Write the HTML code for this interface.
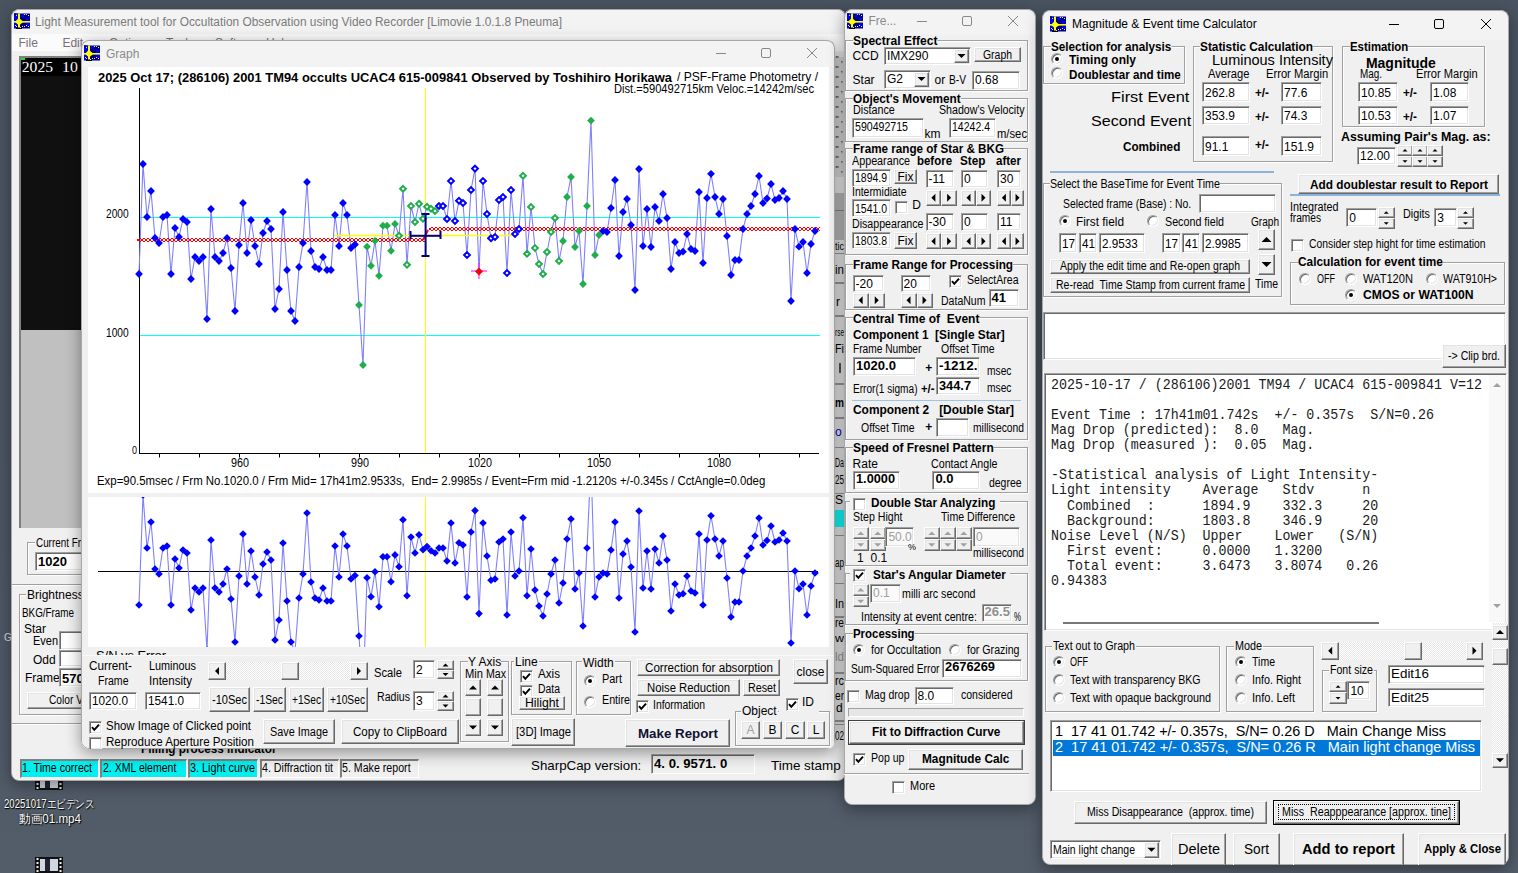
<!DOCTYPE html><html><head><meta charset="utf-8"><style>
*{margin:0;padding:0;box-sizing:border-box}
html,body{width:1518px;height:873px;overflow:hidden}
body{background:linear-gradient(180deg,#4a5461 0%,#4c5663 60%,#535d6a 100%);font-family:"Liberation Sans",sans-serif;font-size:12px;color:#000;position:relative}
.a,.t,.btn,.ed,.ck,.rd,.gb{position:absolute}
.t{white-space:pre;line-height:1;transform-origin:0 0}
.btn{background:#f0f0f0;border-top:1px solid #fff;border-left:1px solid #fff;border-right:1px solid #696969;border-bottom:1px solid #696969;box-shadow:inset -1px -1px 0 #a0a0a0, inset 1px 1px 0 #e3e3e3}
.ed{background:#fff;border-top:1px solid #a0a0a0;border-left:1px solid #a0a0a0;border-right:1px solid #fff;border-bottom:1px solid #fff;box-shadow:inset 1px 1px 0 #696969, inset -1px -1px 0 #e3e3e3}
.ck{width:13px;height:13px;background:#fff;border-top:1px solid #a0a0a0;border-left:1px solid #a0a0a0;border-right:1px solid #fff;border-bottom:1px solid #fff;box-shadow:inset 1px 1px 0 #696969, inset -1px -1px 0 #e3e3e3}
.rd{width:12px;height:12px;border-radius:6px;background:#fff;border:1px solid;border-color:#a0a0a0 #fff #fff #a0a0a0;box-shadow:inset 1px 1px 0 #696969, inset -1px -1px 0 #e3e3e3}
.gb{border:1px solid #a0a0a0;box-shadow:inset 1px 1px 0 #fff, 1px 1px 0 #fff}
.trk{position:absolute;background-color:#f4f4f4;background-image:repeating-conic-gradient(#ffffff 0 25%,#e6e6e6 0 50%);background-size:2px 2px}
.win{position:absolute;background:#f0f0f0;border:1px solid #9a9a9a;border-radius:8px;overflow:hidden;box-shadow:0 2px 10px rgba(0,0,0,.35)}
</style></head><body><svg class="a" style="left:35px;top:766px" width="28" height="24"><rect x="0" y="0" width="28" height="24" fill="#111"/><rect x="5" y="2" width="18" height="20" fill="#cfd8e0"/><rect x="10" y="2" width="5" height="20" fill="#223"/><g fill="#eee"><rect x="1.5" y="1" width="2" height="2"/><rect x="24.5" y="1" width="2" height="2"/><rect x="1.5" y="5" width="2" height="2"/><rect x="24.5" y="5" width="2" height="2"/><rect x="1.5" y="9" width="2" height="2"/><rect x="24.5" y="9" width="2" height="2"/><rect x="1.5" y="13" width="2" height="2"/><rect x="24.5" y="13" width="2" height="2"/><rect x="1.5" y="17" width="2" height="2"/><rect x="24.5" y="17" width="2" height="2"/><rect x="1.5" y="21" width="2" height="2"/><rect x="24.5" y="21" width="2" height="2"/></g></svg>
<div class="t" style="left:4.40px;top:797.64px;font-size:12px;color:#fff;transform:scaleX(0.7990);text-shadow:0 0 2px #000,1px 1px 1px #000;">20251017エビデンス</div>
<div class="t" style="left:18.50px;top:813.14px;font-size:12px;color:#fff;transform:scaleX(0.9683);text-shadow:0 0 2px #000,1px 1px 1px #000;">動画01.mp4</div>
<svg class="a" style="left:35px;top:857px" width="28" height="16"><rect x="0" y="0" width="28" height="16" fill="#111"/><rect x="5" y="2" width="18" height="12" fill="#cfd8e0"/><rect x="10" y="2" width="5" height="12" fill="#223"/><g fill="#eee"><rect x="1.5" y="1" width="2" height="2"/><rect x="24.5" y="1" width="2" height="2"/><rect x="1.5" y="5" width="2" height="2"/><rect x="24.5" y="5" width="2" height="2"/><rect x="1.5" y="9" width="2" height="2"/><rect x="24.5" y="9" width="2" height="2"/><rect x="1.5" y="13" width="2" height="2"/><rect x="24.5" y="13" width="2" height="2"/></g></svg>
<div class="t" style="left:4.00px;top:632.53px;font-size:10px;color:#ddd;">G</div>
<div class="a" style="left:11px;top:9px;width:835px;height:772px;border-radius:8px;box-shadow:0 4px 16px rgba(0,0,0,.4)"></div>
<div class="a" style="left:0;top:0;width:1518px;height:873px;clip-path:inset(9px 672px 92px 11px round 8px)">
<div class="a" style="left:11px;top:9px;width:835px;height:772px;background:#f0f0f0;border:1px solid #a8a8a8;border-radius:8px"></div>
<div class="a" style="left:11px;top:9px;width:835px;height:26px;background:#f3f3f3;border-radius:8px 8px 0 0;border:1px solid #a8a8a8;border-bottom:none"></div>
<svg class="a" style="left:14px;top:13px" width="16" height="16" viewBox="0 0 16 16"><rect x="0" y="0.5" width="16" height="15" fill="#000088"/><rect x="0" y="0.5" width="4.5" height="7" fill="#0000f0"/><rect x="0" y="9" width="3" height="6" fill="#0000e0"/><rect x="7" y="2" width="3" height="2" fill="#0000ff"/><rect x="12" y="5" width="3" height="3" fill="#0000ff"/><rect x="12" y="10" width="4" height="3" fill="#0000ff"/><rect x="0" y="0.5" width="2" height="1" fill="#000"/><rect x="2" y="14.5" width="6" height="1.5" fill="#000"/><rect x="4" y="0.5" width="2" height="14" fill="#ffff00"/><rect x="0" y="8" width="16" height="1.6" fill="#ffff00"/><polygon points="5,4.8 7,6.8 9.5,8.8 7,10.8 5,12.5 3,10.8 1,8.8 3,6.8" fill="#ffff00"/><g fill="#e8e8e8"><rect x="2.0" y="1.9" width="1" height="1"/><rect x="9.9" y="1.0" width="1" height="1"/><rect x="11.9" y="1.0" width="1" height="1"/><rect x="14.0" y="2.0" width="1" height="1"/><rect x="1.0" y="12.0" width="1" height="1"/><rect x="2.0" y="13.0" width="1" height="1"/><rect x="8.0" y="13.0" width="1" height="1"/><rect x="10.0" y="13.0" width="1" height="1"/><rect x="12.0" y="12.0" width="1" height="1"/><rect x="14.0" y="13.0" width="1" height="1"/><rect x="6.0" y="14.0" width="1" height="1"/></g></svg>
<div class="t" style="left:35.00px;top:15.84px;font-size:12px;color:#7a7a7a;transform:scaleX(0.9905);">Light Measurement tool for Occultation Observation using Video Recorder [Limovie 1.0.1.8 Pneuma]</div>
<div class="a" style="left:12px;top:34px;width:834px;height:17px;background:#fbfbfb"></div>
<div class="t" style="left:18.50px;top:37.24px;font-size:12px;color:#7c6f78;">File</div>
<div class="t" style="left:62.40px;top:37.24px;font-size:12px;color:#7c6f78;">Edit</div>
<div class="t" style="left:109.00px;top:37.24px;font-size:12px;color:#7c6f78;">Option</div>
<div class="t" style="left:166.00px;top:37.24px;font-size:12px;color:#7c6f78;">Tools</div>
<div class="t" style="left:215.00px;top:37.24px;font-size:12px;color:#7c6f78;">Software</div>
<div class="t" style="left:266.00px;top:37.24px;font-size:12px;color:#7c6f78;">Help</div>
<div class="a" style="left:19px;top:56px;width:70px;height:472px;background:#c0c0c0;border-top:2px solid #808080;border-left:2px solid #808080"></div>
<div class="a" style="left:21px;top:58px;width:62px;height:272px;background:#101010"></div>
<div class="a" style="left:21px;top:58px;width:62px;height:18px;background:#000"></div>
<div class="t" style="left:21.80px;top:58.79px;font-size:15.6px;color:#fff;font-family:'Liberation Serif',serif;">2025</div>
<div class="t" style="left:61.60px;top:58.79px;font-size:15.6px;color:#fff;transform:scaleX(1.0128);font-family:'Liberation Serif',serif;">10</div>
<div class="a" style="left:21px;top:57.5px;width:4px;height:2px;background:#22dd22"></div>
<div class="gb" style="left:27px;top:542px;width:73px;height:33px"></div>
<div class="a" style="left:35.0px;top:539.0px;width:66.2px;height:6px;background:#f0f0f0"></div>
<div class="t" style="left:36.00px;top:537.34px;font-size:12px;transform:scaleX(0.8229);">Current Frame</div>
<div class="ed" style="left:35px;top:552px;width:65px;height:19px;background:#fff"></div>
<div class="t" style="left:38.00px;top:555.00px;font-size:13px;font-weight:bold;">1020</div>
<div class="a" style="left:12px;top:584px;width:70px;height:1px;background:#a0a0a0"></div>
<div class="a" style="left:12px;top:585px;width:70px;height:1px;background:#fff"></div>
<div class="gb" style="left:19px;top:594px;width:81px;height:121px"></div>
<div class="a" style="left:26.0px;top:591.0px;width:58.7px;height:6px;background:#f0f0f0"></div>
<div class="t" style="left:27.00px;top:588.84px;font-size:12px;">Brightness</div>
<div class="t" style="left:22.00px;top:606.84px;font-size:12px;transform:scaleX(0.8209);">BKG/Frame</div>
<div class="t" style="left:24.00px;top:622.84px;font-size:12px;">Star</div>
<div class="t" style="left:33.00px;top:634.84px;font-size:12px;transform:scaleX(0.9140);">Even</div>
<div class="ed" style="left:59px;top:631px;width:41px;height:19px;background:#fff"></div>
<div class="t" style="left:33.00px;top:653.84px;font-size:12px;">Odd</div>
<div class="ed" style="left:59px;top:650px;width:41px;height:17px;background:#fff"></div>
<div class="t" style="left:25.00px;top:671.84px;font-size:12px;">Frame</div>
<div class="ed" style="left:59px;top:668px;width:41px;height:19px;background:#fff"></div>
<div class="t" style="left:62.00px;top:672.00px;font-size:13px;font-weight:bold;">570</div>
<div class="btn" style="left:27px;top:692px;width:83px;height:17px"></div>
<div class="t" style="left:48.50px;top:694.34px;font-size:12px;transform:scaleX(0.8497);">Color V</div>
<div class="a" style="left:12px;top:723px;width:834px;height:1px;background:#a0a0a0"></div>
<div class="a" style="left:12px;top:724px;width:834px;height:1px;background:#fff"></div>
<div class="t" style="left:141.00px;top:741.50px;font-size:13px;font-weight:bold;transform:scaleX(0.9018);">Filling process indicator</div>
<div class="a" style="left:20px;top:759px;width:79px;height:19px;background:#00f0f0;border-top:2px solid #808080;border-left:2px solid #808080;border-bottom:1px solid #fff;border-right:1px solid #fff"></div>
<div class="t" style="left:22.00px;top:761.84px;font-size:12px;transform:scaleX(0.8821);">1. Time correct</div>
<div class="a" style="left:100px;top:759px;width:87px;height:19px;background:#00f0f0;border-top:2px solid #808080;border-left:2px solid #808080;border-bottom:1px solid #fff;border-right:1px solid #fff"></div>
<div class="t" style="left:102.50px;top:761.84px;font-size:12px;transform:scaleX(0.8780);">2. XML element</div>
<div class="a" style="left:188px;top:759px;width:70px;height:19px;background:#00f0f0;border-top:2px solid #808080;border-left:2px solid #808080;border-bottom:1px solid #fff;border-right:1px solid #fff"></div>
<div class="t" style="left:190.00px;top:761.84px;font-size:12px;transform:scaleX(0.9023);">3. Light curve</div>
<div class="a" style="left:260px;top:759px;width:79px;height:19px;background:#f0f0f0;border-top:2px solid #808080;border-left:2px solid #808080;border-bottom:1px solid #fff;border-right:1px solid #fff"></div>
<div class="t" style="left:262.20px;top:761.84px;font-size:12px;transform:scaleX(0.8896);">4. Diffraction tit</div>
<div class="a" style="left:340px;top:759px;width:79px;height:19px;background:#f0f0f0;border-top:2px solid #808080;border-left:2px solid #808080;border-bottom:1px solid #fff;border-right:1px solid #fff"></div>
<div class="t" style="left:342.30px;top:761.84px;font-size:12px;transform:scaleX(0.8867);">5. Make report</div>
<div class="t" style="left:531.30px;top:758.60px;font-size:13px;transform:scaleX(1.0245);">SharpCap version:</div>
<div class="a" style="left:651px;top:754px;width:104px;height:20px;background:#f0f0f0;border-top:1px solid #a0a0a0;border-left:1px solid #a0a0a0;border-right:1px solid #fff;border-bottom:1px solid #fff;box-shadow:inset 1px 1px 0 #696969"></div>
<div class="t" style="left:654.40px;top:758.04px;font-size:12px;font-weight:bold;transform:scaleX(1.0971);">4. 0. 9571. 0</div>
<div class="t" style="left:771.20px;top:758.60px;font-size:13px;transform:scaleX(1.0338);">Time stamp</div>
<div class="a" style="left:835px;top:52px;width:9px;height:696px;background:#ececec"></div>
<div class="a" style="left:835px;top:57px;width:9px;height:120px;background:#dadada"></div>
<div class="t" style="left:835.50px;top:55.38px;font-size:9px;color:#222;">"</div>
<div class="t" style="left:840.50px;top:55.38px;font-size:9px;color:#222;">,</div>
<div class="t" style="left:835.50px;top:65.38px;font-size:9px;color:#222;">"</div>
<div class="t" style="left:840.50px;top:65.38px;font-size:9px;color:#222;">,</div>
<div class="t" style="left:835.50px;top:75.38px;font-size:9px;color:#222;">"</div>
<div class="t" style="left:840.50px;top:75.38px;font-size:9px;color:#222;">,</div>
<div class="t" style="left:835.50px;top:85.38px;font-size:9px;color:#222;">"</div>
<div class="t" style="left:840.50px;top:85.38px;font-size:9px;color:#222;">,</div>
<div class="t" style="left:835.50px;top:95.38px;font-size:9px;color:#222;">"</div>
<div class="t" style="left:840.50px;top:95.38px;font-size:9px;color:#222;">,</div>
<div class="t" style="left:835.50px;top:105.38px;font-size:9px;color:#222;">"</div>
<div class="t" style="left:840.50px;top:105.38px;font-size:9px;color:#222;">,</div>
<div class="t" style="left:835.50px;top:115.38px;font-size:9px;color:#222;">"</div>
<div class="t" style="left:840.50px;top:115.38px;font-size:9px;color:#222;">,</div>
<div class="t" style="left:835.50px;top:125.38px;font-size:9px;color:#222;">"</div>
<div class="t" style="left:840.50px;top:125.38px;font-size:9px;color:#222;">,</div>
<div class="t" style="left:835.50px;top:135.38px;font-size:9px;color:#222;">"</div>
<div class="t" style="left:840.50px;top:135.38px;font-size:9px;color:#222;">,</div>
<div class="t" style="left:835.50px;top:145.38px;font-size:9px;color:#222;">"</div>
<div class="t" style="left:840.50px;top:145.38px;font-size:9px;color:#222;">,</div>
<div class="t" style="left:835.50px;top:155.38px;font-size:9px;color:#222;">"</div>
<div class="t" style="left:840.50px;top:155.38px;font-size:9px;color:#222;">,</div>
<div class="t" style="left:835.50px;top:165.38px;font-size:9px;color:#222;">"</div>
<div class="t" style="left:840.50px;top:165.38px;font-size:9px;color:#222;">,</div>
<div class="a" style="left:835px;top:193px;width:9px;height:50px;background:#bdbdbd"></div>
<div class="a" style="left:835px;top:210px;width:9px;height:1px;background:#888"></div>
<div class="a" style="left:835px;top:240px;width:9px;height:12px;background:#ececec"></div>
<div class="t" style="left:835.00px;top:240.69px;font-size:11px;transform:scaleX(0.8182);">tic</div>
<div class="a" style="left:835px;top:252.6px;width:9px;height:1.5px;background:#9a9a9a"></div>
<div class="a" style="left:835px;top:282.3px;width:9px;height:1.5px;background:#9a9a9a"></div>
<div class="a" style="left:835px;top:315.4px;width:9px;height:1.5px;background:#9a9a9a"></div>
<div class="a" style="left:835px;top:383px;width:9px;height:1.5px;background:#9a9a9a"></div>
<div class="a" style="left:835px;top:417px;width:9px;height:1.5px;background:#9a9a9a"></div>
<div class="a" style="left:835px;top:446.9px;width:9px;height:1.5px;background:#9a9a9a"></div>
<div class="a" style="left:835px;top:492.6px;width:9px;height:1.5px;background:#9a9a9a"></div>
<div class="a" style="left:835px;top:534.9px;width:9px;height:1.5px;background:#9a9a9a"></div>
<div class="a" style="left:835px;top:582.9px;width:9px;height:1.5px;background:#9a9a9a"></div>
<div class="a" style="left:835px;top:616px;width:9px;height:1.5px;background:#9a9a9a"></div>
<div class="a" style="left:835px;top:672px;width:9px;height:1.5px;background:#9a9a9a"></div>
<div class="a" style="left:835px;top:720px;width:9px;height:1.5px;background:#9a9a9a"></div>
<div class="a" style="left:835px;top:723.6px;width:9px;height:1.5px;background:#9a9a9a"></div>
<div class="t" style="left:835.00px;top:264.14px;font-size:12px;transform:scaleX(0.9637);">in</div>
<div class="t" style="left:836.00px;top:296.14px;font-size:12px;">r</div>
<div class="t" style="left:835.00px;top:327.54px;font-size:10px;transform:scaleX(0.6479);">rse</div>
<div class="t" style="left:835.00px;top:342.84px;font-size:12px;transform:scaleX(0.9004);">Fi</div>
<div class="a" style="left:839px;top:363px;width:1.5px;height:10px;background:#555"></div>
<div class="t" style="left:835.00px;top:396.74px;font-size:12px;font-weight:bold;transform:scaleX(0.8435);">m</div>
<div class="t" style="left:835.00px;top:426.44px;font-size:12px;color:#00c;">o</div>
<div class="t" style="left:835.00px;top:457.24px;font-size:12px;transform:scaleX(0.5867);">Da</div>
<div class="t" style="left:835.00px;top:474.44px;font-size:12px;transform:scaleX(0.6743);">25</div>
<div class="t" style="left:835.00px;top:493.84px;font-size:12px;">S</div>
<div class="a" style="left:835px;top:509.7px;width:9px;height:17px;background:#10ffff"></div>
<div class="t" style="left:835.00px;top:556.74px;font-size:12px;transform:scaleX(0.6743);">ap</div>
<div class="t" style="left:835.00px;top:597.84px;font-size:12px;transform:scaleX(0.8993);">In</div>
<div class="t" style="left:835.00px;top:617.24px;font-size:12px;transform:scaleX(0.8435);">re</div>
<div class="t" style="left:835.00px;top:632.69px;font-size:11px;transform:scaleX(1.1330);">w</div>
<div class="t" style="left:835.00px;top:651.04px;font-size:12px;color:#999;transform:scaleX(0.9637);">ld</div>
<div class="t" style="left:835.00px;top:674.84px;font-size:12px;transform:scaleX(0.9003);">rc</div>
<div class="t" style="left:835.00px;top:690.44px;font-size:12px;transform:scaleX(0.8435);">er</div>
<div class="t" style="left:836.00px;top:702.44px;font-size:12px;">d</div>
<div class="t" style="left:835.00px;top:729.84px;font-size:12px;transform:scaleX(0.6743);">02</div>
</div>
<div class="a" style="left:81px;top:40px;width:754px;height:709px;border-radius:8px;box-shadow:0 4px 16px rgba(0,0,0,.4)"></div>
<div class="a" style="left:0;top:0;width:1518px;height:873px;clip-path:inset(40px 683px 124px 81px round 8px)">
<div class="a" style="left:81px;top:40px;width:754px;height:709px;background:#f0f0f0;border:1px solid #a8a8a8;border-radius:8px"></div>
<div class="a" style="left:81px;top:40px;width:754px;height:27px;background:#f3f3f3;border-radius:8px 8px 0 0;border:1px solid #a8a8a8;border-bottom:none"></div>
<svg class="a" style="left:84px;top:45px" width="16" height="16" viewBox="0 0 16 16"><rect x="0" y="0.5" width="16" height="15" fill="#000088"/><rect x="0" y="0.5" width="4.5" height="7" fill="#0000f0"/><rect x="0" y="9" width="3" height="6" fill="#0000e0"/><rect x="7" y="2" width="3" height="2" fill="#0000ff"/><rect x="12" y="5" width="3" height="3" fill="#0000ff"/><rect x="12" y="10" width="4" height="3" fill="#0000ff"/><rect x="0" y="0.5" width="2" height="1" fill="#000"/><rect x="2" y="14.5" width="6" height="1.5" fill="#000"/><rect x="4" y="0.5" width="2" height="14" fill="#ffff00"/><rect x="0" y="8" width="16" height="1.6" fill="#ffff00"/><polygon points="5,4.8 7,6.8 9.5,8.8 7,10.8 5,12.5 3,10.8 1,8.8 3,6.8" fill="#ffff00"/><g fill="#e8e8e8"><rect x="2.0" y="1.9" width="1" height="1"/><rect x="9.9" y="1.0" width="1" height="1"/><rect x="11.9" y="1.0" width="1" height="1"/><rect x="14.0" y="2.0" width="1" height="1"/><rect x="1.0" y="12.0" width="1" height="1"/><rect x="2.0" y="13.0" width="1" height="1"/><rect x="8.0" y="13.0" width="1" height="1"/><rect x="10.0" y="13.0" width="1" height="1"/><rect x="12.0" y="12.0" width="1" height="1"/><rect x="14.0" y="13.0" width="1" height="1"/><rect x="6.0" y="14.0" width="1" height="1"/></g></svg>
<div class="t" style="left:106.00px;top:47.64px;font-size:12px;color:#8a8a8a;">Graph</div>
<svg class="a" style="left:0;top:0;overflow:visible" width="1" height="1"><line x1="716" y1="53.5" x2="726" y2="53.5" stroke="#888" stroke-width="1"/><rect x="761.5" y="48.5" width="9" height="9" rx="1.5" fill="none" stroke="#888" stroke-width="1"/><path d="M807 48.0 L817 58.0 M817 48.0 L807 58.0" stroke="#888" stroke-width="1"/></svg>
<div class="a" style="left:88px;top:67px;width:741px;height:426px;background:#fff"></div>
<div class="a" style="left:88px;top:497px;width:741px;height:150px;background:#fff"></div>
<svg class="a" style="left:0;top:0" width="1518" height="873"><defs><pattern id="rp" x="1" y="238" width="4" height="4" patternUnits="userSpaceOnUse"><rect x="2" y="0" width="2" height="1" fill="#ff0000"/><rect x="0" y="1" width="2" height="2" fill="#ff0000"/><rect x="2" y="3" width="2" height="1" fill="#ff0000"/></pattern><pattern id="rp2" x="1" y="227" width="4" height="4" patternUnits="userSpaceOnUse"><rect x="2" y="0" width="2" height="1" fill="#ff0000"/><rect x="0" y="1" width="2" height="2" fill="#ff0000"/><rect x="2" y="3" width="2" height="1" fill="#ff0000"/></pattern><clipPath id="c1"><rect x="88" y="67" width="741" height="426"/></clipPath><clipPath id="c2"><rect x="88" y="497" width="741" height="150"/></clipPath></defs><g clip-path="url(#c1)"><rect x="139" y="217" width="681" height="1" fill="#00ffff"/><rect x="139" y="335" width="681" height="1" fill="#00ffff"/><rect x="425" y="88" width="1" height="365" fill="#ffff00"/><rect x="139" y="88" width="1" height="366" fill="#000"/><rect x="139" y="453" width="680" height="1" fill="#000"/><rect x="159.0" y="454" width="1" height="3.5" fill="#000"/><rect x="199.0" y="454" width="1" height="3.5" fill="#000"/><rect x="239.0" y="454" width="1" height="3.5" fill="#000"/><rect x="279.0" y="454" width="1" height="3.5" fill="#000"/><rect x="319.0" y="454" width="1" height="3.5" fill="#000"/><rect x="359.0" y="454" width="1" height="3.5" fill="#000"/><rect x="399.0" y="454" width="1" height="3.5" fill="#000"/><rect x="439.0" y="454" width="1" height="3.5" fill="#000"/><rect x="479.0" y="454" width="1" height="3.5" fill="#000"/><rect x="519.0" y="454" width="1" height="3.5" fill="#000"/><rect x="559.0" y="454" width="1" height="3.5" fill="#000"/><rect x="599.0" y="454" width="1" height="3.5" fill="#000"/><rect x="639.0" y="454" width="1" height="3.5" fill="#000"/><rect x="679.0" y="454" width="1" height="3.5" fill="#000"/><rect x="719.0" y="454" width="1" height="3.5" fill="#000"/><rect x="759.0" y="454" width="1" height="3.5" fill="#000"/><rect x="799.0" y="454" width="1" height="3.5" fill="#000"/><polyline points="139,274.0 143,164.0 147,217.0 151,191.0 155,238.0 159,243.0 163,217.0 167,215.0 171,274.0 175,228.0 179,237.0 183,219.0 187,222.0 191,279.0 195,257.0 199,261.0 203,257.0 207,319.0 211,209.0 215,257.0 219,261.0 223,253.0 227,238.0 231,268.0 235,311.0 239,245.0 243,203.0 247,253.0 251,220.0 255,246.0 259,264.0 263,233.0 267,221.0 271,229.0 275,309.0 279,289.0 283,212.0 287,270.0 291,311.0 295,321.0 299,267.0 303,243.0 307,182.0 311,251.0 315,267.0 319,269.0 323,257.0 327,270.0 331,270.0 335,215.0 339,246.0 343,203.0 347,215.0 351,248.0 355,244.5 359,305.0 363,365.0 367,246.7 371,265.8 375,240.8 379,275.8 383,225.7 387,225.7 391,250.8 395,223.9 399,235.7 403,188.8 407,264.8 411,206.0 415,222.0 419,203.7 423,218.8 427,206.8 431,208.8 435,211.0 439,206.0 443,206.0 447,219.0 451,181.0 455,221.0 459,200.8 463,203.0 467,255.0 471,190.0 475,168.6 479,271.6 483,181.0 487,214.0 491,238.3 495,237.0 499,200.0 503,197.0 507,273.0 511,190.0 515,234.0 519,229.0 523,175.8 527,253.7 531,207.0 535,248.0 539,264.0 543,274.0 547,252.0 551,232.0 555,218.0 559,261.0 563,241.0 567,197.0 571,177.0 575,247.0 579,231.0 583,284.0 587,206.0 591,120.6 595,255.0 599,235.0 603,231.0 607,232.0 611,208.0 615,180.0 619,256.0 623,212.0 627,199.0 631,225.0 635,290.0 639,169.0 643,246.0 647,209.0 651,247.0 655,207.0 659,221.0 663,194.0 667,218.0 671,269.0 675,242.0 679,253.0 683,251.7 687,234.0 691,249.0 695,251.0 699,192.0 703,263.0 707,198.0 711,173.8 715,197.0 719,214.0 723,199.0 727,236.0 731,275.0 735,260.0 739,260.0 743,229.0 747,214.0 751,206.0 755,194.0 759,176.0 763,203.0 767,198.5 771,184.0 775,200.0 779,198.0 783,191.0 787,199.0 791,301.0 795,229.0 799,246.7 803,242.0 807,273.0 811,244.0 815,231.0" fill="none" stroke="#8080ff" stroke-width="1.1"/><rect x="137" y="238" width="288" height="4" fill="url(#rp)"/><rect x="429" y="227" width="391" height="4" fill="url(#rp2)"/><path d="M423 240 L428 230" stroke="#ff0000" stroke-width="2"/><rect x="334" y="234.8" width="182" height="1.5" fill="#ffff00"/><path d="M139.0 270.1 L142.9 274.0 L139.0 277.9 L135.1 274.0 Z" fill="#0000ff"/><path d="M143.0 160.1 L146.9 164.0 L143.0 167.9 L139.1 164.0 Z" fill="#0000ff"/><path d="M147.0 213.1 L150.9 217.0 L147.0 220.9 L143.1 217.0 Z" fill="#0000ff"/><path d="M151.0 187.1 L154.9 191.0 L151.0 194.9 L147.1 191.0 Z" fill="#0000ff"/><path d="M155.0 234.1 L158.9 238.0 L155.0 241.9 L151.1 238.0 Z" fill="#0000ff"/><path d="M159.0 239.1 L162.9 243.0 L159.0 246.9 L155.1 243.0 Z" fill="#0000ff"/><path d="M163.0 213.1 L166.9 217.0 L163.0 220.9 L159.1 217.0 Z" fill="#0000ff"/><path d="M167.0 211.1 L170.9 215.0 L167.0 218.9 L163.1 215.0 Z" fill="#0000ff"/><path d="M171.0 270.1 L174.9 274.0 L171.0 277.9 L167.1 274.0 Z" fill="#0000ff"/><path d="M175.0 224.1 L178.9 228.0 L175.0 231.9 L171.1 228.0 Z" fill="#0000ff"/><path d="M179.0 233.1 L182.9 237.0 L179.0 240.9 L175.1 237.0 Z" fill="#0000ff"/><path d="M183.0 215.1 L186.9 219.0 L183.0 222.9 L179.1 219.0 Z" fill="#0000ff"/><path d="M187.0 218.1 L190.9 222.0 L187.0 225.9 L183.1 222.0 Z" fill="#0000ff"/><path d="M191.0 275.1 L194.9 279.0 L191.0 282.9 L187.1 279.0 Z" fill="#0000ff"/><path d="M195.0 253.1 L198.9 257.0 L195.0 260.9 L191.1 257.0 Z" fill="#0000ff"/><path d="M199.0 257.1 L202.9 261.0 L199.0 264.9 L195.1 261.0 Z" fill="#0000ff"/><path d="M203.0 253.1 L206.9 257.0 L203.0 260.9 L199.1 257.0 Z" fill="#0000ff"/><path d="M207.0 315.1 L210.9 319.0 L207.0 322.9 L203.1 319.0 Z" fill="#0000ff"/><path d="M211.0 205.1 L214.9 209.0 L211.0 212.9 L207.1 209.0 Z" fill="#0000ff"/><path d="M215.0 253.1 L218.9 257.0 L215.0 260.9 L211.1 257.0 Z" fill="#0000ff"/><path d="M219.0 257.1 L222.9 261.0 L219.0 264.9 L215.1 261.0 Z" fill="#0000ff"/><path d="M223.0 249.1 L226.9 253.0 L223.0 256.9 L219.1 253.0 Z" fill="#0000ff"/><path d="M227.0 234.1 L230.9 238.0 L227.0 241.9 L223.1 238.0 Z" fill="#0000ff"/><path d="M231.0 264.1 L234.9 268.0 L231.0 271.9 L227.1 268.0 Z" fill="#0000ff"/><path d="M235.0 307.1 L238.9 311.0 L235.0 314.9 L231.1 311.0 Z" fill="#0000ff"/><path d="M239.0 241.1 L242.9 245.0 L239.0 248.9 L235.1 245.0 Z" fill="#0000ff"/><path d="M243.0 199.1 L246.9 203.0 L243.0 206.9 L239.1 203.0 Z" fill="#0000ff"/><path d="M247.0 249.1 L250.9 253.0 L247.0 256.9 L243.1 253.0 Z" fill="#0000ff"/><path d="M251.0 216.1 L254.9 220.0 L251.0 223.9 L247.1 220.0 Z" fill="#0000ff"/><path d="M255.0 242.1 L258.9 246.0 L255.0 249.9 L251.1 246.0 Z" fill="#0000ff"/><path d="M259.0 260.1 L262.9 264.0 L259.0 267.9 L255.1 264.0 Z" fill="#0000ff"/><path d="M263.0 229.1 L266.9 233.0 L263.0 236.9 L259.1 233.0 Z" fill="#0000ff"/><path d="M267.0 217.1 L270.9 221.0 L267.0 224.9 L263.1 221.0 Z" fill="#0000ff"/><path d="M271.0 225.1 L274.9 229.0 L271.0 232.9 L267.1 229.0 Z" fill="#0000ff"/><path d="M275.0 305.1 L278.9 309.0 L275.0 312.9 L271.1 309.0 Z" fill="#0000ff"/><path d="M279.0 285.1 L282.9 289.0 L279.0 292.9 L275.1 289.0 Z" fill="#0000ff"/><path d="M283.0 208.1 L286.9 212.0 L283.0 215.9 L279.1 212.0 Z" fill="#0000ff"/><path d="M287.0 266.1 L290.9 270.0 L287.0 273.9 L283.1 270.0 Z" fill="#0000ff"/><path d="M291.0 307.1 L294.9 311.0 L291.0 314.9 L287.1 311.0 Z" fill="#0000ff"/><path d="M295.0 317.1 L298.9 321.0 L295.0 324.9 L291.1 321.0 Z" fill="#0000ff"/><path d="M299.0 263.1 L302.9 267.0 L299.0 270.9 L295.1 267.0 Z" fill="#0000ff"/><path d="M303.0 239.1 L306.9 243.0 L303.0 246.9 L299.1 243.0 Z" fill="#0000ff"/><path d="M307.0 178.1 L310.9 182.0 L307.0 185.9 L303.1 182.0 Z" fill="#0000ff"/><path d="M311.0 247.1 L314.9 251.0 L311.0 254.9 L307.1 251.0 Z" fill="#0000ff"/><path d="M315.0 263.1 L318.9 267.0 L315.0 270.9 L311.1 267.0 Z" fill="#0000ff"/><path d="M319.0 265.1 L322.9 269.0 L319.0 272.9 L315.1 269.0 Z" fill="#0000ff"/><path d="M323.0 253.1 L326.9 257.0 L323.0 260.9 L319.1 257.0 Z" fill="#0000ff"/><path d="M327.0 266.1 L330.9 270.0 L327.0 273.9 L323.1 270.0 Z" fill="#0000ff"/><path d="M331.0 266.1 L334.9 270.0 L331.0 273.9 L327.1 270.0 Z" fill="#0000ff"/><path d="M335.0 211.1 L338.9 215.0 L335.0 218.9 L331.1 215.0 Z" fill="#0000ff"/><path d="M339.0 242.1 L342.9 246.0 L339.0 249.9 L335.1 246.0 Z" fill="#0000ff"/><path d="M343.0 199.1 L346.9 203.0 L343.0 206.9 L339.1 203.0 Z" fill="#0000ff"/><path d="M347.0 211.1 L350.9 215.0 L347.0 218.9 L343.1 215.0 Z" fill="#0000ff"/><path d="M351.0 244.1 L354.9 248.0 L351.0 251.9 L347.1 248.0 Z" fill="#0000ff"/><path d="M355.0 240.6 L358.9 244.5 L355.0 248.4 L351.1 244.5 Z" fill="#0000ff"/><path d="M359.0 301.1 L362.9 305.0 L359.0 308.9 L355.1 305.0 Z" fill="#1fae4a"/><path d="M363.0 361.1 L366.9 365.0 L363.0 368.9 L359.1 365.0 Z" fill="#1fae4a"/><path d="M367.0 242.8 L370.9 246.7 L367.0 250.6 L363.1 246.7 Z" fill="#1fae4a"/><path d="M371.0 261.9 L374.9 265.8 L371.0 269.7 L367.1 265.8 Z" fill="#1fae4a"/><path d="M375.0 236.9 L378.9 240.8 L375.0 244.7 L371.1 240.8 Z" fill="#1fae4a"/><path d="M379.0 271.9 L382.9 275.8 L379.0 279.7 L375.1 275.8 Z" fill="#1fae4a"/><path d="M383.0 221.8 L386.9 225.7 L383.0 229.6 L379.1 225.7 Z" fill="#1fae4a"/><path d="M387.0 221.8 L390.9 225.7 L387.0 229.6 L383.1 225.7 Z" fill="#1fae4a"/><path d="M391.0 246.9 L394.9 250.8 L391.0 254.7 L387.1 250.8 Z" fill="#1fae4a"/><path d="M395.0 220.0 L398.9 223.9 L395.0 227.8 L391.1 223.9 Z" fill="#1fae4a"/><path d="M399.0 232.8 L401.9 235.7 L399.0 238.6 L396.1 235.7 Z" fill="#fff" stroke="#1fae4a" stroke-width="2"/><path d="M403.0 185.9 L405.9 188.8 L403.0 191.7 L400.1 188.8 Z" fill="#fff" stroke="#1fae4a" stroke-width="2"/><path d="M407.0 261.9 L409.9 264.8 L407.0 267.7 L404.1 264.8 Z" fill="#fff" stroke="#1fae4a" stroke-width="2"/><path d="M411.0 203.1 L413.9 206.0 L411.0 208.9 L408.1 206.0 Z" fill="#fff" stroke="#1fae4a" stroke-width="2"/><path d="M415.0 219.1 L417.9 222.0 L415.0 224.9 L412.1 222.0 Z" fill="#fff" stroke="#1fae4a" stroke-width="2"/><path d="M419.0 200.8 L421.9 203.7 L419.0 206.6 L416.1 203.7 Z" fill="#fff" stroke="#1fae4a" stroke-width="2"/><path d="M423.0 215.9 L425.9 218.8 L423.0 221.7 L420.1 218.8 Z" fill="#fff" stroke="#1fae4a" stroke-width="2"/><path d="M427.0 203.9 L429.9 206.8 L427.0 209.7 L424.1 206.8 Z" fill="#fff" stroke="#1fae4a" stroke-width="2"/><path d="M431.0 205.9 L433.9 208.8 L431.0 211.7 L428.1 208.8 Z" fill="#fff" stroke="#1fae4a" stroke-width="2"/><path d="M435.0 208.1 L437.9 211.0 L435.0 213.9 L432.1 211.0 Z" fill="#fff" stroke="#1fae4a" stroke-width="2"/><path d="M439.0 203.1 L441.9 206.0 L439.0 208.9 L436.1 206.0 Z" fill="#fff" stroke="#0000ff" stroke-width="2"/><path d="M443.0 203.1 L445.9 206.0 L443.0 208.9 L440.1 206.0 Z" fill="#fff" stroke="#0000ff" stroke-width="2"/><path d="M447.0 216.1 L449.9 219.0 L447.0 221.9 L444.1 219.0 Z" fill="#fff" stroke="#0000ff" stroke-width="2"/><path d="M451.0 178.1 L453.9 181.0 L451.0 183.9 L448.1 181.0 Z" fill="#fff" stroke="#0000ff" stroke-width="2"/><path d="M455.0 218.1 L457.9 221.0 L455.0 223.9 L452.1 221.0 Z" fill="#fff" stroke="#0000ff" stroke-width="2"/><path d="M459.0 197.9 L461.9 200.8 L459.0 203.7 L456.1 200.8 Z" fill="#fff" stroke="#0000ff" stroke-width="2"/><path d="M463.0 200.1 L465.9 203.0 L463.0 205.9 L460.1 203.0 Z" fill="#fff" stroke="#0000ff" stroke-width="2"/><path d="M467.0 252.1 L469.9 255.0 L467.0 257.9 L464.1 255.0 Z" fill="#fff" stroke="#0000ff" stroke-width="2"/><path d="M471.0 187.1 L473.9 190.0 L471.0 192.9 L468.1 190.0 Z" fill="#fff" stroke="#0000ff" stroke-width="2"/><path d="M475.0 165.7 L477.9 168.6 L475.0 171.5 L472.1 168.6 Z" fill="#fff" stroke="#0000ff" stroke-width="2"/><path d="M483.0 178.1 L485.9 181.0 L483.0 183.9 L480.1 181.0 Z" fill="#fff" stroke="#0000ff" stroke-width="2"/><path d="M487.0 211.1 L489.9 214.0 L487.0 216.9 L484.1 214.0 Z" fill="#fff" stroke="#0000ff" stroke-width="2"/><path d="M491.0 235.4 L493.9 238.3 L491.0 241.2 L488.1 238.3 Z" fill="#fff" stroke="#0000ff" stroke-width="2"/><path d="M495.0 234.1 L497.9 237.0 L495.0 239.9 L492.1 237.0 Z" fill="#fff" stroke="#0000ff" stroke-width="2"/><path d="M499.0 197.1 L501.9 200.0 L499.0 202.9 L496.1 200.0 Z" fill="#fff" stroke="#0000ff" stroke-width="2"/><path d="M503.0 194.1 L505.9 197.0 L503.0 199.9 L500.1 197.0 Z" fill="#fff" stroke="#0000ff" stroke-width="2"/><path d="M507.0 270.1 L509.9 273.0 L507.0 275.9 L504.1 273.0 Z" fill="#fff" stroke="#0000ff" stroke-width="2"/><path d="M511.0 187.1 L513.9 190.0 L511.0 192.9 L508.1 190.0 Z" fill="#fff" stroke="#0000ff" stroke-width="2"/><path d="M515.0 231.1 L517.9 234.0 L515.0 236.9 L512.1 234.0 Z" fill="#fff" stroke="#0000ff" stroke-width="2"/><path d="M519.0 226.1 L521.9 229.0 L519.0 231.9 L516.1 229.0 Z" fill="#fff" stroke="#0000ff" stroke-width="2"/><path d="M523.0 172.9 L525.9 175.8 L523.0 178.7 L520.1 175.8 Z" fill="#fff" stroke="#1fae4a" stroke-width="2"/><path d="M527.0 250.8 L529.9 253.7 L527.0 256.6 L524.1 253.7 Z" fill="#fff" stroke="#1fae4a" stroke-width="2"/><path d="M531.0 204.1 L533.9 207.0 L531.0 209.9 L528.1 207.0 Z" fill="#fff" stroke="#1fae4a" stroke-width="2"/><path d="M535.0 245.1 L537.9 248.0 L535.0 250.9 L532.1 248.0 Z" fill="#fff" stroke="#1fae4a" stroke-width="2"/><path d="M539.0 261.1 L541.9 264.0 L539.0 266.9 L536.1 264.0 Z" fill="#fff" stroke="#1fae4a" stroke-width="2"/><path d="M543.0 271.1 L545.9 274.0 L543.0 276.9 L540.1 274.0 Z" fill="#fff" stroke="#1fae4a" stroke-width="2"/><path d="M547.0 249.1 L549.9 252.0 L547.0 254.9 L544.1 252.0 Z" fill="#fff" stroke="#1fae4a" stroke-width="2"/><path d="M551.0 229.1 L553.9 232.0 L551.0 234.9 L548.1 232.0 Z" fill="#fff" stroke="#1fae4a" stroke-width="2"/><path d="M555.0 215.1 L557.9 218.0 L555.0 220.9 L552.1 218.0 Z" fill="#fff" stroke="#1fae4a" stroke-width="2"/><path d="M559.0 258.1 L561.9 261.0 L559.0 263.9 L556.1 261.0 Z" fill="#fff" stroke="#1fae4a" stroke-width="2"/><path d="M563.0 237.1 L566.9 241.0 L563.0 244.9 L559.1 241.0 Z" fill="#1fae4a"/><path d="M567.0 193.1 L570.9 197.0 L567.0 200.9 L563.1 197.0 Z" fill="#1fae4a"/><path d="M571.0 173.1 L574.9 177.0 L571.0 180.9 L567.1 177.0 Z" fill="#1fae4a"/><path d="M575.0 243.1 L578.9 247.0 L575.0 250.9 L571.1 247.0 Z" fill="#1fae4a"/><path d="M579.0 227.1 L582.9 231.0 L579.0 234.9 L575.1 231.0 Z" fill="#1fae4a"/><path d="M583.0 280.1 L586.9 284.0 L583.0 287.9 L579.1 284.0 Z" fill="#1fae4a"/><path d="M587.0 202.1 L590.9 206.0 L587.0 209.9 L583.1 206.0 Z" fill="#1fae4a"/><path d="M591.0 116.7 L594.9 120.6 L591.0 124.5 L587.1 120.6 Z" fill="#1fae4a"/><path d="M595.0 251.1 L598.9 255.0 L595.0 258.9 L591.1 255.0 Z" fill="#1fae4a"/><path d="M599.0 231.1 L602.9 235.0 L599.0 238.9 L595.1 235.0 Z" fill="#1fae4a"/><path d="M603.0 227.1 L606.9 231.0 L603.0 234.9 L599.1 231.0 Z" fill="#0000ff"/><path d="M607.0 228.1 L610.9 232.0 L607.0 235.9 L603.1 232.0 Z" fill="#0000ff"/><path d="M611.0 204.1 L614.9 208.0 L611.0 211.9 L607.1 208.0 Z" fill="#0000ff"/><path d="M615.0 176.1 L618.9 180.0 L615.0 183.9 L611.1 180.0 Z" fill="#0000ff"/><path d="M619.0 252.1 L622.9 256.0 L619.0 259.9 L615.1 256.0 Z" fill="#0000ff"/><path d="M623.0 208.1 L626.9 212.0 L623.0 215.9 L619.1 212.0 Z" fill="#0000ff"/><path d="M627.0 195.1 L630.9 199.0 L627.0 202.9 L623.1 199.0 Z" fill="#0000ff"/><path d="M631.0 221.1 L634.9 225.0 L631.0 228.9 L627.1 225.0 Z" fill="#0000ff"/><path d="M635.0 286.1 L638.9 290.0 L635.0 293.9 L631.1 290.0 Z" fill="#0000ff"/><path d="M639.0 165.1 L642.9 169.0 L639.0 172.9 L635.1 169.0 Z" fill="#0000ff"/><path d="M643.0 242.1 L646.9 246.0 L643.0 249.9 L639.1 246.0 Z" fill="#0000ff"/><path d="M647.0 205.1 L650.9 209.0 L647.0 212.9 L643.1 209.0 Z" fill="#0000ff"/><path d="M651.0 243.1 L654.9 247.0 L651.0 250.9 L647.1 247.0 Z" fill="#0000ff"/><path d="M655.0 203.1 L658.9 207.0 L655.0 210.9 L651.1 207.0 Z" fill="#0000ff"/><path d="M659.0 217.1 L662.9 221.0 L659.0 224.9 L655.1 221.0 Z" fill="#0000ff"/><path d="M663.0 190.1 L666.9 194.0 L663.0 197.9 L659.1 194.0 Z" fill="#0000ff"/><path d="M667.0 214.1 L670.9 218.0 L667.0 221.9 L663.1 218.0 Z" fill="#0000ff"/><path d="M671.0 265.1 L674.9 269.0 L671.0 272.9 L667.1 269.0 Z" fill="#0000ff"/><path d="M675.0 238.1 L678.9 242.0 L675.0 245.9 L671.1 242.0 Z" fill="#0000ff"/><path d="M679.0 249.1 L682.9 253.0 L679.0 256.9 L675.1 253.0 Z" fill="#0000ff"/><path d="M683.0 247.8 L686.9 251.7 L683.0 255.6 L679.1 251.7 Z" fill="#0000ff"/><path d="M687.0 230.1 L690.9 234.0 L687.0 237.9 L683.1 234.0 Z" fill="#0000ff"/><path d="M691.0 245.1 L694.9 249.0 L691.0 252.9 L687.1 249.0 Z" fill="#0000ff"/><path d="M695.0 247.1 L698.9 251.0 L695.0 254.9 L691.1 251.0 Z" fill="#0000ff"/><path d="M699.0 188.1 L702.9 192.0 L699.0 195.9 L695.1 192.0 Z" fill="#0000ff"/><path d="M703.0 259.1 L706.9 263.0 L703.0 266.9 L699.1 263.0 Z" fill="#0000ff"/><path d="M707.0 194.1 L710.9 198.0 L707.0 201.9 L703.1 198.0 Z" fill="#0000ff"/><path d="M711.0 169.9 L714.9 173.8 L711.0 177.7 L707.1 173.8 Z" fill="#0000ff"/><path d="M715.0 193.1 L718.9 197.0 L715.0 200.9 L711.1 197.0 Z" fill="#0000ff"/><path d="M719.0 210.1 L722.9 214.0 L719.0 217.9 L715.1 214.0 Z" fill="#0000ff"/><path d="M723.0 195.1 L726.9 199.0 L723.0 202.9 L719.1 199.0 Z" fill="#0000ff"/><path d="M727.0 232.1 L730.9 236.0 L727.0 239.9 L723.1 236.0 Z" fill="#0000ff"/><path d="M731.0 271.1 L734.9 275.0 L731.0 278.9 L727.1 275.0 Z" fill="#0000ff"/><path d="M735.0 256.1 L738.9 260.0 L735.0 263.9 L731.1 260.0 Z" fill="#0000ff"/><path d="M739.0 256.1 L742.9 260.0 L739.0 263.9 L735.1 260.0 Z" fill="#0000ff"/><path d="M743.0 225.1 L746.9 229.0 L743.0 232.9 L739.1 229.0 Z" fill="#0000ff"/><path d="M747.0 210.1 L750.9 214.0 L747.0 217.9 L743.1 214.0 Z" fill="#0000ff"/><path d="M751.0 202.1 L754.9 206.0 L751.0 209.9 L747.1 206.0 Z" fill="#0000ff"/><path d="M755.0 190.1 L758.9 194.0 L755.0 197.9 L751.1 194.0 Z" fill="#0000ff"/><path d="M759.0 172.1 L762.9 176.0 L759.0 179.9 L755.1 176.0 Z" fill="#0000ff"/><path d="M763.0 199.1 L766.9 203.0 L763.0 206.9 L759.1 203.0 Z" fill="#0000ff"/><path d="M767.0 194.6 L770.9 198.5 L767.0 202.4 L763.1 198.5 Z" fill="#0000ff"/><path d="M771.0 180.1 L774.9 184.0 L771.0 187.9 L767.1 184.0 Z" fill="#0000ff"/><path d="M775.0 196.1 L778.9 200.0 L775.0 203.9 L771.1 200.0 Z" fill="#0000ff"/><path d="M779.0 194.1 L782.9 198.0 L779.0 201.9 L775.1 198.0 Z" fill="#0000ff"/><path d="M783.0 187.1 L786.9 191.0 L783.0 194.9 L779.1 191.0 Z" fill="#0000ff"/><path d="M787.0 195.1 L790.9 199.0 L787.0 202.9 L783.1 199.0 Z" fill="#0000ff"/><path d="M791.0 297.1 L794.9 301.0 L791.0 304.9 L787.1 301.0 Z" fill="#0000ff"/><path d="M795.0 225.1 L798.9 229.0 L795.0 232.9 L791.1 229.0 Z" fill="#0000ff"/><path d="M799.0 242.8 L802.9 246.7 L799.0 250.6 L795.1 246.7 Z" fill="#0000ff"/><path d="M803.0 238.1 L806.9 242.0 L803.0 245.9 L799.1 242.0 Z" fill="#0000ff"/><path d="M807.0 269.1 L810.9 273.0 L807.0 276.9 L803.1 273.0 Z" fill="#0000ff"/><path d="M811.0 240.1 L814.9 244.0 L811.0 247.9 L807.1 244.0 Z" fill="#0000ff"/><path d="M815.0 227.1 L818.9 231.0 L815.0 234.9 L811.1 231.0 Z" fill="#0000ff"/><path d="M471 271 h16 M479 263 v16" stroke="#ff00ff" stroke-width="1"/><path d="M479.0 267.6 L483.0 271.6 L479.0 275.6 L475.0 271.6 Z" fill="#ff0000"/><g fill="#000080"><rect x="410" y="234.8" width="31" height="2"/><rect x="409.5" y="231" width="2" height="8"/><rect x="439.5" y="231" width="2" height="8"/><rect x="424.6" y="214" width="2" height="42.5"/><rect x="421.5" y="213" width="8" height="2"/><rect x="421.5" y="255" width="8" height="2"/></g></g><g clip-path="url(#c2)"><rect x="425" y="497" width="1" height="150" fill="#ffff00"/><rect x="98" y="571" width="720" height="1" fill="#000"/><polyline points="139,605.0 143,495.0 147,548.0 151,522.0 155,569.0 159,574.0 163,548.0 167,546.0 171,605.0 175,559.0 179,568.0 183,550.0 187,553.0 191,610.0 195,588.0 199,592.0 203,588.0 207,650.0 211,540.0 215,588.0 219,592.0 223,584.0 227,569.0 231,599.0 235,642.0 239,576.0 243,534.0 247,584.0 251,551.0 255,577.0 259,595.0 263,564.0 267,552.0 271,560.0 275,640.0 279,620.0 283,543.0 287,601.0 291,642.0 295,652.0 299,598.0 303,574.0 307,513.0 311,582.0 315,598.0 319,600.0 323,588.0 327,601.0 331,601.0 335,546.0 339,577.0 343,534.0 347,546.0 351,579.0 355,575.5 359,636.0 363,696.0 367,577.7 371,596.8 375,571.8 379,606.8 383,556.7 387,556.7 391,581.8 395,554.9 399,566.7 403,519.8 407,595.8 411,537.0 415,553.0 419,534.7 423,549.8 427,546.6 431,550.8 435,553.0 439,548.0 443,548.0 447,561.0 451,523.0 455,563.0 459,542.8 463,545.0 467,597.0 471,532.0 475,510.6 479,613.6 483,523.0 487,556.0 491,580.3 495,579.0 499,542.0 503,539.0 507,615.0 511,532.0 515,576.0 519,571.0 523,517.8 527,595.7 531,549.0 535,590.0 539,606.0 543,616.0 547,594.0 551,574.0 555,560.0 559,603.0 563,583.0 567,539.0 571,519.0 575,589.0 579,573.0 583,626.0 587,548.0 591,462.6 595,597.0 599,577.0 603,573.0 607,574.0 611,550.0 615,522.0 619,598.0 623,554.0 627,541.0 631,567.0 635,632.0 639,511.0 643,588.0 647,551.0 651,589.0 655,549.0 659,563.0 663,536.0 667,560.0 671,611.0 675,584.0 679,595.0 683,593.7 687,576.0 691,591.0 695,593.0 699,534.0 703,605.0 707,540.0 711,515.8 715,539.0 719,556.0 723,541.0 727,578.0 731,617.0 735,602.0 739,602.0 743,571.0 747,556.0 751,548.0 755,536.0 759,518.0 763,545.0 767,540.5 771,526.0 775,542.0 779,540.0 783,533.0 787,541.0 791,643.0 795,571.0 799,588.7 803,584.0 807,615.0 811,586.0 815,573.0" fill="none" stroke="#8080ff" stroke-width="1.1"/><path d="M139.0 601.2 L142.8 605.0 L139.0 608.8 L135.2 605.0 Z" fill="#0000ff"/><path d="M143.0 491.2 L146.8 495.0 L143.0 498.8 L139.2 495.0 Z" fill="#0000ff"/><path d="M147.0 544.2 L150.8 548.0 L147.0 551.8 L143.2 548.0 Z" fill="#0000ff"/><path d="M151.0 518.2 L154.8 522.0 L151.0 525.8 L147.2 522.0 Z" fill="#0000ff"/><path d="M155.0 565.2 L158.8 569.0 L155.0 572.8 L151.2 569.0 Z" fill="#0000ff"/><path d="M159.0 570.2 L162.8 574.0 L159.0 577.8 L155.2 574.0 Z" fill="#0000ff"/><path d="M163.0 544.2 L166.8 548.0 L163.0 551.8 L159.2 548.0 Z" fill="#0000ff"/><path d="M167.0 542.2 L170.8 546.0 L167.0 549.8 L163.2 546.0 Z" fill="#0000ff"/><path d="M171.0 601.2 L174.8 605.0 L171.0 608.8 L167.2 605.0 Z" fill="#0000ff"/><path d="M175.0 555.2 L178.8 559.0 L175.0 562.8 L171.2 559.0 Z" fill="#0000ff"/><path d="M179.0 564.2 L182.8 568.0 L179.0 571.8 L175.2 568.0 Z" fill="#0000ff"/><path d="M183.0 546.2 L186.8 550.0 L183.0 553.8 L179.2 550.0 Z" fill="#0000ff"/><path d="M187.0 549.2 L190.8 553.0 L187.0 556.8 L183.2 553.0 Z" fill="#0000ff"/><path d="M191.0 606.2 L194.8 610.0 L191.0 613.8 L187.2 610.0 Z" fill="#0000ff"/><path d="M195.0 584.2 L198.8 588.0 L195.0 591.8 L191.2 588.0 Z" fill="#0000ff"/><path d="M199.0 588.2 L202.8 592.0 L199.0 595.8 L195.2 592.0 Z" fill="#0000ff"/><path d="M203.0 584.2 L206.8 588.0 L203.0 591.8 L199.2 588.0 Z" fill="#0000ff"/><path d="M207.0 646.2 L210.8 650.0 L207.0 653.8 L203.2 650.0 Z" fill="#0000ff"/><path d="M211.0 536.2 L214.8 540.0 L211.0 543.8 L207.2 540.0 Z" fill="#0000ff"/><path d="M215.0 584.2 L218.8 588.0 L215.0 591.8 L211.2 588.0 Z" fill="#0000ff"/><path d="M219.0 588.2 L222.8 592.0 L219.0 595.8 L215.2 592.0 Z" fill="#0000ff"/><path d="M223.0 580.2 L226.8 584.0 L223.0 587.8 L219.2 584.0 Z" fill="#0000ff"/><path d="M227.0 565.2 L230.8 569.0 L227.0 572.8 L223.2 569.0 Z" fill="#0000ff"/><path d="M231.0 595.2 L234.8 599.0 L231.0 602.8 L227.2 599.0 Z" fill="#0000ff"/><path d="M235.0 638.2 L238.8 642.0 L235.0 645.8 L231.2 642.0 Z" fill="#0000ff"/><path d="M239.0 572.2 L242.8 576.0 L239.0 579.8 L235.2 576.0 Z" fill="#0000ff"/><path d="M243.0 530.2 L246.8 534.0 L243.0 537.8 L239.2 534.0 Z" fill="#0000ff"/><path d="M247.0 580.2 L250.8 584.0 L247.0 587.8 L243.2 584.0 Z" fill="#0000ff"/><path d="M251.0 547.2 L254.8 551.0 L251.0 554.8 L247.2 551.0 Z" fill="#0000ff"/><path d="M255.0 573.2 L258.8 577.0 L255.0 580.8 L251.2 577.0 Z" fill="#0000ff"/><path d="M259.0 591.2 L262.8 595.0 L259.0 598.8 L255.2 595.0 Z" fill="#0000ff"/><path d="M263.0 560.2 L266.8 564.0 L263.0 567.8 L259.2 564.0 Z" fill="#0000ff"/><path d="M267.0 548.2 L270.8 552.0 L267.0 555.8 L263.2 552.0 Z" fill="#0000ff"/><path d="M271.0 556.2 L274.8 560.0 L271.0 563.8 L267.2 560.0 Z" fill="#0000ff"/><path d="M275.0 636.2 L278.8 640.0 L275.0 643.8 L271.2 640.0 Z" fill="#0000ff"/><path d="M279.0 616.2 L282.8 620.0 L279.0 623.8 L275.2 620.0 Z" fill="#0000ff"/><path d="M283.0 539.2 L286.8 543.0 L283.0 546.8 L279.2 543.0 Z" fill="#0000ff"/><path d="M287.0 597.2 L290.8 601.0 L287.0 604.8 L283.2 601.0 Z" fill="#0000ff"/><path d="M291.0 638.2 L294.8 642.0 L291.0 645.8 L287.2 642.0 Z" fill="#0000ff"/><path d="M295.0 648.2 L298.8 652.0 L295.0 655.8 L291.2 652.0 Z" fill="#0000ff"/><path d="M299.0 594.2 L302.8 598.0 L299.0 601.8 L295.2 598.0 Z" fill="#0000ff"/><path d="M303.0 570.2 L306.8 574.0 L303.0 577.8 L299.2 574.0 Z" fill="#0000ff"/><path d="M307.0 509.2 L310.8 513.0 L307.0 516.8 L303.2 513.0 Z" fill="#0000ff"/><path d="M311.0 578.2 L314.8 582.0 L311.0 585.8 L307.2 582.0 Z" fill="#0000ff"/><path d="M315.0 594.2 L318.8 598.0 L315.0 601.8 L311.2 598.0 Z" fill="#0000ff"/><path d="M319.0 596.2 L322.8 600.0 L319.0 603.8 L315.2 600.0 Z" fill="#0000ff"/><path d="M323.0 584.2 L326.8 588.0 L323.0 591.8 L319.2 588.0 Z" fill="#0000ff"/><path d="M327.0 597.2 L330.8 601.0 L327.0 604.8 L323.2 601.0 Z" fill="#0000ff"/><path d="M331.0 597.2 L334.8 601.0 L331.0 604.8 L327.2 601.0 Z" fill="#0000ff"/><path d="M335.0 542.2 L338.8 546.0 L335.0 549.8 L331.2 546.0 Z" fill="#0000ff"/><path d="M339.0 573.2 L342.8 577.0 L339.0 580.8 L335.2 577.0 Z" fill="#0000ff"/><path d="M343.0 530.2 L346.8 534.0 L343.0 537.8 L339.2 534.0 Z" fill="#0000ff"/><path d="M347.0 542.2 L350.8 546.0 L347.0 549.8 L343.2 546.0 Z" fill="#0000ff"/><path d="M351.0 575.2 L354.8 579.0 L351.0 582.8 L347.2 579.0 Z" fill="#0000ff"/><path d="M355.0 571.7 L358.8 575.5 L355.0 579.3 L351.2 575.5 Z" fill="#0000ff"/><path d="M359.0 632.2 L362.8 636.0 L359.0 639.8 L355.2 636.0 Z" fill="#0000ff"/><path d="M363.0 692.2 L366.8 696.0 L363.0 699.8 L359.2 696.0 Z" fill="#0000ff"/><path d="M367.0 573.9 L370.8 577.7 L367.0 581.5 L363.2 577.7 Z" fill="#0000ff"/><path d="M371.0 593.0 L374.8 596.8 L371.0 600.6 L367.2 596.8 Z" fill="#0000ff"/><path d="M375.0 568.0 L378.8 571.8 L375.0 575.6 L371.2 571.8 Z" fill="#0000ff"/><path d="M379.0 603.0 L382.8 606.8 L379.0 610.6 L375.2 606.8 Z" fill="#0000ff"/><path d="M383.0 552.9 L386.8 556.7 L383.0 560.5 L379.2 556.7 Z" fill="#0000ff"/><path d="M387.0 552.9 L390.8 556.7 L387.0 560.5 L383.2 556.7 Z" fill="#0000ff"/><path d="M391.0 578.0 L394.8 581.8 L391.0 585.6 L387.2 581.8 Z" fill="#0000ff"/><path d="M395.0 551.1 L398.8 554.9 L395.0 558.7 L391.2 554.9 Z" fill="#0000ff"/><path d="M399.0 562.9 L402.8 566.7 L399.0 570.5 L395.2 566.7 Z" fill="#0000ff"/><path d="M403.0 516.0 L406.8 519.8 L403.0 523.6 L399.2 519.8 Z" fill="#0000ff"/><path d="M407.0 592.0 L410.8 595.8 L407.0 599.6 L403.2 595.8 Z" fill="#0000ff"/><path d="M411.0 533.2 L414.8 537.0 L411.0 540.8 L407.2 537.0 Z" fill="#0000ff"/><path d="M415.0 549.2 L418.8 553.0 L415.0 556.8 L411.2 553.0 Z" fill="#0000ff"/><path d="M419.0 530.9 L422.8 534.7 L419.0 538.5 L415.2 534.7 Z" fill="#0000ff"/><path d="M423.0 546.0 L426.8 549.8 L423.0 553.6 L419.2 549.8 Z" fill="#0000ff"/><path d="M427.0 542.8 L430.8 546.6 L427.0 550.4 L423.2 546.6 Z" fill="#0000ff"/><path d="M431.0 547.0 L434.8 550.8 L431.0 554.6 L427.2 550.8 Z" fill="#0000ff"/><path d="M435.0 549.2 L438.8 553.0 L435.0 556.8 L431.2 553.0 Z" fill="#0000ff"/><path d="M439.0 544.2 L442.8 548.0 L439.0 551.8 L435.2 548.0 Z" fill="#0000ff"/><path d="M443.0 544.2 L446.8 548.0 L443.0 551.8 L439.2 548.0 Z" fill="#0000ff"/><path d="M447.0 557.2 L450.8 561.0 L447.0 564.8 L443.2 561.0 Z" fill="#0000ff"/><path d="M451.0 519.2 L454.8 523.0 L451.0 526.8 L447.2 523.0 Z" fill="#0000ff"/><path d="M455.0 559.2 L458.8 563.0 L455.0 566.8 L451.2 563.0 Z" fill="#0000ff"/><path d="M459.0 539.0 L462.8 542.8 L459.0 546.6 L455.2 542.8 Z" fill="#0000ff"/><path d="M463.0 541.2 L466.8 545.0 L463.0 548.8 L459.2 545.0 Z" fill="#0000ff"/><path d="M467.0 593.2 L470.8 597.0 L467.0 600.8 L463.2 597.0 Z" fill="#0000ff"/><path d="M471.0 528.2 L474.8 532.0 L471.0 535.8 L467.2 532.0 Z" fill="#0000ff"/><path d="M475.0 506.8 L478.8 510.6 L475.0 514.4 L471.2 510.6 Z" fill="#0000ff"/><path d="M479.0 609.8 L482.8 613.6 L479.0 617.4 L475.2 613.6 Z" fill="#0000ff"/><path d="M483.0 519.2 L486.8 523.0 L483.0 526.8 L479.2 523.0 Z" fill="#0000ff"/><path d="M487.0 552.2 L490.8 556.0 L487.0 559.8 L483.2 556.0 Z" fill="#0000ff"/><path d="M491.0 576.5 L494.8 580.3 L491.0 584.1 L487.2 580.3 Z" fill="#0000ff"/><path d="M495.0 575.2 L498.8 579.0 L495.0 582.8 L491.2 579.0 Z" fill="#0000ff"/><path d="M499.0 538.2 L502.8 542.0 L499.0 545.8 L495.2 542.0 Z" fill="#0000ff"/><path d="M503.0 535.2 L506.8 539.0 L503.0 542.8 L499.2 539.0 Z" fill="#0000ff"/><path d="M507.0 611.2 L510.8 615.0 L507.0 618.8 L503.2 615.0 Z" fill="#0000ff"/><path d="M511.0 528.2 L514.8 532.0 L511.0 535.8 L507.2 532.0 Z" fill="#0000ff"/><path d="M515.0 572.2 L518.8 576.0 L515.0 579.8 L511.2 576.0 Z" fill="#0000ff"/><path d="M519.0 567.2 L522.8 571.0 L519.0 574.8 L515.2 571.0 Z" fill="#0000ff"/><path d="M523.0 514.0 L526.8 517.8 L523.0 521.6 L519.2 517.8 Z" fill="#0000ff"/><path d="M527.0 591.9 L530.8 595.7 L527.0 599.5 L523.2 595.7 Z" fill="#0000ff"/><path d="M531.0 545.2 L534.8 549.0 L531.0 552.8 L527.2 549.0 Z" fill="#0000ff"/><path d="M535.0 586.2 L538.8 590.0 L535.0 593.8 L531.2 590.0 Z" fill="#0000ff"/><path d="M539.0 602.2 L542.8 606.0 L539.0 609.8 L535.2 606.0 Z" fill="#0000ff"/><path d="M543.0 612.2 L546.8 616.0 L543.0 619.8 L539.2 616.0 Z" fill="#0000ff"/><path d="M547.0 590.2 L550.8 594.0 L547.0 597.8 L543.2 594.0 Z" fill="#0000ff"/><path d="M551.0 570.2 L554.8 574.0 L551.0 577.8 L547.2 574.0 Z" fill="#0000ff"/><path d="M555.0 556.2 L558.8 560.0 L555.0 563.8 L551.2 560.0 Z" fill="#0000ff"/><path d="M559.0 599.2 L562.8 603.0 L559.0 606.8 L555.2 603.0 Z" fill="#0000ff"/><path d="M563.0 579.2 L566.8 583.0 L563.0 586.8 L559.2 583.0 Z" fill="#0000ff"/><path d="M567.0 535.2 L570.8 539.0 L567.0 542.8 L563.2 539.0 Z" fill="#0000ff"/><path d="M571.0 515.2 L574.8 519.0 L571.0 522.8 L567.2 519.0 Z" fill="#0000ff"/><path d="M575.0 585.2 L578.8 589.0 L575.0 592.8 L571.2 589.0 Z" fill="#0000ff"/><path d="M579.0 569.2 L582.8 573.0 L579.0 576.8 L575.2 573.0 Z" fill="#0000ff"/><path d="M583.0 622.2 L586.8 626.0 L583.0 629.8 L579.2 626.0 Z" fill="#0000ff"/><path d="M587.0 544.2 L590.8 548.0 L587.0 551.8 L583.2 548.0 Z" fill="#0000ff"/><path d="M591.0 458.8 L594.8 462.6 L591.0 466.4 L587.2 462.6 Z" fill="#0000ff"/><path d="M595.0 593.2 L598.8 597.0 L595.0 600.8 L591.2 597.0 Z" fill="#0000ff"/><path d="M599.0 573.2 L602.8 577.0 L599.0 580.8 L595.2 577.0 Z" fill="#0000ff"/><path d="M603.0 569.2 L606.8 573.0 L603.0 576.8 L599.2 573.0 Z" fill="#0000ff"/><path d="M607.0 570.2 L610.8 574.0 L607.0 577.8 L603.2 574.0 Z" fill="#0000ff"/><path d="M611.0 546.2 L614.8 550.0 L611.0 553.8 L607.2 550.0 Z" fill="#0000ff"/><path d="M615.0 518.2 L618.8 522.0 L615.0 525.8 L611.2 522.0 Z" fill="#0000ff"/><path d="M619.0 594.2 L622.8 598.0 L619.0 601.8 L615.2 598.0 Z" fill="#0000ff"/><path d="M623.0 550.2 L626.8 554.0 L623.0 557.8 L619.2 554.0 Z" fill="#0000ff"/><path d="M627.0 537.2 L630.8 541.0 L627.0 544.8 L623.2 541.0 Z" fill="#0000ff"/><path d="M631.0 563.2 L634.8 567.0 L631.0 570.8 L627.2 567.0 Z" fill="#0000ff"/><path d="M635.0 628.2 L638.8 632.0 L635.0 635.8 L631.2 632.0 Z" fill="#0000ff"/><path d="M639.0 507.2 L642.8 511.0 L639.0 514.8 L635.2 511.0 Z" fill="#0000ff"/><path d="M643.0 584.2 L646.8 588.0 L643.0 591.8 L639.2 588.0 Z" fill="#0000ff"/><path d="M647.0 547.2 L650.8 551.0 L647.0 554.8 L643.2 551.0 Z" fill="#0000ff"/><path d="M651.0 585.2 L654.8 589.0 L651.0 592.8 L647.2 589.0 Z" fill="#0000ff"/><path d="M655.0 545.2 L658.8 549.0 L655.0 552.8 L651.2 549.0 Z" fill="#0000ff"/><path d="M659.0 559.2 L662.8 563.0 L659.0 566.8 L655.2 563.0 Z" fill="#0000ff"/><path d="M663.0 532.2 L666.8 536.0 L663.0 539.8 L659.2 536.0 Z" fill="#0000ff"/><path d="M667.0 556.2 L670.8 560.0 L667.0 563.8 L663.2 560.0 Z" fill="#0000ff"/><path d="M671.0 607.2 L674.8 611.0 L671.0 614.8 L667.2 611.0 Z" fill="#0000ff"/><path d="M675.0 580.2 L678.8 584.0 L675.0 587.8 L671.2 584.0 Z" fill="#0000ff"/><path d="M679.0 591.2 L682.8 595.0 L679.0 598.8 L675.2 595.0 Z" fill="#0000ff"/><path d="M683.0 589.9 L686.8 593.7 L683.0 597.5 L679.2 593.7 Z" fill="#0000ff"/><path d="M687.0 572.2 L690.8 576.0 L687.0 579.8 L683.2 576.0 Z" fill="#0000ff"/><path d="M691.0 587.2 L694.8 591.0 L691.0 594.8 L687.2 591.0 Z" fill="#0000ff"/><path d="M695.0 589.2 L698.8 593.0 L695.0 596.8 L691.2 593.0 Z" fill="#0000ff"/><path d="M699.0 530.2 L702.8 534.0 L699.0 537.8 L695.2 534.0 Z" fill="#0000ff"/><path d="M703.0 601.2 L706.8 605.0 L703.0 608.8 L699.2 605.0 Z" fill="#0000ff"/><path d="M707.0 536.2 L710.8 540.0 L707.0 543.8 L703.2 540.0 Z" fill="#0000ff"/><path d="M711.0 512.0 L714.8 515.8 L711.0 519.6 L707.2 515.8 Z" fill="#0000ff"/><path d="M715.0 535.2 L718.8 539.0 L715.0 542.8 L711.2 539.0 Z" fill="#0000ff"/><path d="M719.0 552.2 L722.8 556.0 L719.0 559.8 L715.2 556.0 Z" fill="#0000ff"/><path d="M723.0 537.2 L726.8 541.0 L723.0 544.8 L719.2 541.0 Z" fill="#0000ff"/><path d="M727.0 574.2 L730.8 578.0 L727.0 581.8 L723.2 578.0 Z" fill="#0000ff"/><path d="M731.0 613.2 L734.8 617.0 L731.0 620.8 L727.2 617.0 Z" fill="#0000ff"/><path d="M735.0 598.2 L738.8 602.0 L735.0 605.8 L731.2 602.0 Z" fill="#0000ff"/><path d="M739.0 598.2 L742.8 602.0 L739.0 605.8 L735.2 602.0 Z" fill="#0000ff"/><path d="M743.0 567.2 L746.8 571.0 L743.0 574.8 L739.2 571.0 Z" fill="#0000ff"/><path d="M747.0 552.2 L750.8 556.0 L747.0 559.8 L743.2 556.0 Z" fill="#0000ff"/><path d="M751.0 544.2 L754.8 548.0 L751.0 551.8 L747.2 548.0 Z" fill="#0000ff"/><path d="M755.0 532.2 L758.8 536.0 L755.0 539.8 L751.2 536.0 Z" fill="#0000ff"/><path d="M759.0 514.2 L762.8 518.0 L759.0 521.8 L755.2 518.0 Z" fill="#0000ff"/><path d="M763.0 541.2 L766.8 545.0 L763.0 548.8 L759.2 545.0 Z" fill="#0000ff"/><path d="M767.0 536.7 L770.8 540.5 L767.0 544.3 L763.2 540.5 Z" fill="#0000ff"/><path d="M771.0 522.2 L774.8 526.0 L771.0 529.8 L767.2 526.0 Z" fill="#0000ff"/><path d="M775.0 538.2 L778.8 542.0 L775.0 545.8 L771.2 542.0 Z" fill="#0000ff"/><path d="M779.0 536.2 L782.8 540.0 L779.0 543.8 L775.2 540.0 Z" fill="#0000ff"/><path d="M783.0 529.2 L786.8 533.0 L783.0 536.8 L779.2 533.0 Z" fill="#0000ff"/><path d="M787.0 537.2 L790.8 541.0 L787.0 544.8 L783.2 541.0 Z" fill="#0000ff"/><path d="M791.0 639.2 L794.8 643.0 L791.0 646.8 L787.2 643.0 Z" fill="#0000ff"/><path d="M795.0 567.2 L798.8 571.0 L795.0 574.8 L791.2 571.0 Z" fill="#0000ff"/><path d="M799.0 584.9 L802.8 588.7 L799.0 592.5 L795.2 588.7 Z" fill="#0000ff"/><path d="M803.0 580.2 L806.8 584.0 L803.0 587.8 L799.2 584.0 Z" fill="#0000ff"/><path d="M807.0 611.2 L810.8 615.0 L807.0 618.8 L803.2 615.0 Z" fill="#0000ff"/><path d="M811.0 582.2 L814.8 586.0 L811.0 589.8 L807.2 586.0 Z" fill="#0000ff"/><path d="M815.0 569.2 L818.8 573.0 L815.0 576.8 L811.2 573.0 Z" fill="#0000ff"/></g></svg>
<div class="t" style="left:97.80px;top:70.50px;font-size:13px;font-weight:bold;transform:scaleX(0.9934);">2025 Oct 17; (286106) 2001 TM94 occults UCAC4 615-009841 Observed by Toshihiro Horikawa</div>
<div class="t" style="left:677.00px;top:71.34px;font-size:12px;transform:scaleX(1.0069);">/ PSF-Frame Photometry /</div>
<div class="t" style="left:614.00px;top:83.44px;font-size:12px;transform:scaleX(0.9282);">Dist.=590492715km Veloc.=14242m/sec</div>
<div class="t" style="left:105.70px;top:208.44px;font-size:12px;transform:scaleX(0.8504);">2000</div>
<div class="t" style="left:105.70px;top:326.54px;font-size:12px;transform:scaleX(0.8504);">1000</div>
<div class="t" style="left:131.50px;top:445.19px;font-size:11px;transform:scaleX(0.8174);">0</div>
<div class="t" style="left:231.00px;top:457.44px;font-size:12px;transform:scaleX(0.8991);">960</div>
<div class="t" style="left:350.60px;top:457.44px;font-size:12px;transform:scaleX(0.8991);">990</div>
<div class="t" style="left:467.50px;top:457.44px;font-size:12px;transform:scaleX(0.8991);">1020</div>
<div class="t" style="left:587.30px;top:457.44px;font-size:12px;transform:scaleX(0.8991);">1050</div>
<div class="t" style="left:707.00px;top:457.44px;font-size:12px;transform:scaleX(0.8991);">1080</div>
<div class="t" style="left:97.40px;top:474.64px;font-size:12px;transform:scaleX(0.9515);">Exp=90.5msec / Frm No.1020.0 / Frm Mid= 17h41m2.9533s,  End= 2.9985s / Event=Frm mid -1.2120s +/-0.345s / CctAngle=0.0deg</div>
<div class="t" style="left:96.30px;top:649.84px;font-size:12px;transform:scaleX(1.0713);">S/N vs Error</div>
<div class="a" style="left:82px;top:655px;width:752px;height:93px;background:#f0f0f0;border-top:1px solid #fafafa;border-radius:0 0 0 8px"></div>
<div class="t" style="left:89.00px;top:659.64px;font-size:12px;transform:scaleX(0.9770);">Current-</div>
<div class="t" style="left:97.50px;top:675.34px;font-size:12px;transform:scaleX(0.8797);">Frame</div>
<div class="t" style="left:149.00px;top:659.64px;font-size:12px;transform:scaleX(0.9033);">Luminous</div>
<div class="t" style="left:149.00px;top:675.34px;font-size:12px;transform:scaleX(0.9622);">Intensity</div>
<div class="ed" style="left:89px;top:692px;width:48px;height:18px;background:#fff"></div>
<div class="t" style="left:92.00px;top:695.16px;font-size:12px;transform:scaleX(0.9809);">1020.0</div>
<div class="ed" style="left:145px;top:692px;width:56px;height:18px;background:#fff"></div>
<div class="t" style="left:148.00px;top:695.16px;font-size:12px;transform:scaleX(0.9809);">1541.0</div>
<div class="trk" style="left:208px;top:662px;width:160px;height:18px"></div>
<div class="btn" style="left:208px;top:662px;width:18px;height:18px"></div>
<svg class="a" style="left:0;top:0;overflow:visible" width="1" height="1"><polygon points="219.0,667.0 219.0,675.0 215.0,671.0" fill="#000"/></svg>
<div class="btn" style="left:350px;top:662px;width:18px;height:18px"></div>
<svg class="a" style="left:0;top:0;overflow:visible" width="1" height="1"><polygon points="357.0,667.0 357.0,675.0 361.0,671.0" fill="#000"/></svg>
<div class="btn" style="left:281px;top:662px;width:18px;height:18px"></div>
<div class="t" style="left:374.00px;top:667.34px;font-size:12px;transform:scaleX(0.9328);">Scale</div>
<div class="ed" style="left:413px;top:660px;width:22px;height:19px;background:#fff"></div>
<div class="t" style="left:416.00px;top:663.66px;font-size:12px;">2</div>
<div class="btn" style="left:437px;top:660px;width:17px;height:10px"></div>
<svg class="a" style="left:0;top:0;overflow:visible" width="1" height="1"><polygon points="442.5,666.5 448.5,666.5 445.5,663.5" fill="#000"/></svg>
<div class="btn" style="left:437px;top:670px;width:17px;height:9px"></div>
<svg class="a" style="left:0;top:0;overflow:visible" width="1" height="1"><polygon points="442.5,673.0 448.5,673.0 445.5,676.0" fill="#000"/></svg>
<div class="t" style="left:377.00px;top:690.84px;font-size:12px;transform:scaleX(0.8835);">Radius</div>
<div class="ed" style="left:413px;top:691px;width:22px;height:20px;background:#fff"></div>
<div class="t" style="left:416.00px;top:695.16px;font-size:12px;">3</div>
<div class="btn" style="left:437px;top:691px;width:17px;height:10px"></div>
<svg class="a" style="left:0;top:0;overflow:visible" width="1" height="1"><polygon points="442.5,697.5 448.5,697.5 445.5,694.5" fill="#000"/></svg>
<div class="btn" style="left:437px;top:701px;width:17px;height:10px"></div>
<svg class="a" style="left:0;top:0;overflow:visible" width="1" height="1"><polygon points="442.5,704.5 448.5,704.5 445.5,707.5" fill="#000"/></svg>
<div class="btn" style="left:209px;top:687px;width:41px;height:25px"></div>
<div class="t" style="left:212.00px;top:693.66px;font-size:12px;transform:scaleX(0.9205);">-10Sec</div>
<div class="btn" style="left:253px;top:687px;width:33px;height:25px"></div>
<div class="t" style="left:256.00px;top:693.66px;font-size:12px;transform:scaleX(0.8613);">-1Sec</div>
<div class="btn" style="left:289px;top:687px;width:35px;height:25px"></div>
<div class="t" style="left:292.00px;top:693.66px;font-size:12px;transform:scaleX(0.8440);">+1Sec</div>
<div class="btn" style="left:327px;top:687px;width:41px;height:25px"></div>
<div class="t" style="left:330.00px;top:693.66px;font-size:12px;transform:scaleX(0.8530);">+10Sec</div>
<div class="ck" style="left:89px;top:721px"><svg width="11" height="11" style="position:absolute;left:0;top:0"><path d="M2 5.2 L4.3 7.8 L9 2.6" stroke="#000" stroke-width="2" fill="none"/></svg></div>
<div class="t" style="left:106.30px;top:720.44px;font-size:12px;transform:scaleX(0.9535);">Show Image of Clicked point</div>
<div class="ck" style="left:89px;top:737px"></div>
<div class="t" style="left:106.30px;top:735.84px;font-size:12px;transform:scaleX(0.9646);">Reproduce Aperture Position</div>
<div class="btn" style="left:263px;top:719px;width:72px;height:25px"></div>
<div class="t" style="left:270.00px;top:725.66px;font-size:12px;transform:scaleX(0.9057);">Save Image</div>
<div class="btn" style="left:341px;top:719px;width:118px;height:25px"></div>
<div class="t" style="left:353.00px;top:725.66px;font-size:12px;transform:scaleX(0.9653);">Copy to ClipBoard</div>
<div class="gb" style="left:460px;top:661px;width:49px;height:81px"></div>
<div class="t" style="left:468.00px;top:655.64px;font-size:12px;background:#f0f0f0;">Y Axis</div>
<div class="t" style="left:465.00px;top:667.54px;font-size:12px;transform:scaleX(0.9309);">Min</div>
<div class="t" style="left:486.00px;top:667.54px;font-size:12px;transform:scaleX(0.8822);">Max</div>
<div class="btn" style="left:465px;top:679px;width:16px;height:17px"></div>
<svg class="a" style="left:0;top:0;overflow:visible" width="1" height="1"><polygon points="469.0,689.5 477.0,689.5 473.0,685.5" fill="#000"/></svg>
<div class="btn" style="left:465px;top:698px;width:16px;height:18px"></div>
<div class="btn" style="left:465px;top:719px;width:16px;height:17px"></div>
<svg class="a" style="left:0;top:0;overflow:visible" width="1" height="1"><polygon points="469.0,725.5 477.0,725.5 473.0,729.5" fill="#000"/></svg>
<div class="btn" style="left:487px;top:679px;width:16px;height:17px"></div>
<svg class="a" style="left:0;top:0;overflow:visible" width="1" height="1"><polygon points="491.0,689.5 499.0,689.5 495.0,685.5" fill="#000"/></svg>
<div class="btn" style="left:487px;top:698px;width:16px;height:18px"></div>
<div class="btn" style="left:487px;top:719px;width:16px;height:17px"></div>
<svg class="a" style="left:0;top:0;overflow:visible" width="1" height="1"><polygon points="491.0,725.5 499.0,725.5 495.0,729.5" fill="#000"/></svg>
<div class="gb" style="left:511px;top:661px;width:61px;height:54px"></div>
<div class="a" style="left:514.0px;top:658.0px;width:24.7px;height:6px;background:#f0f0f0"></div>
<div class="t" style="left:515.00px;top:655.64px;font-size:12px;">Line</div>
<div class="ck" style="left:520px;top:670px"><svg width="11" height="11" style="position:absolute;left:0;top:0"><path d="M2 5.2 L4.3 7.8 L9 2.6" stroke="#000" stroke-width="2" fill="none"/></svg></div>
<div class="t" style="left:537.70px;top:668.04px;font-size:12px;transform:scaleX(0.9704);">Axis</div>
<div class="ck" style="left:520px;top:685px"><svg width="11" height="11" style="position:absolute;left:0;top:0"><path d="M2 5.2 L4.3 7.8 L9 2.6" stroke="#000" stroke-width="2" fill="none"/></svg></div>
<div class="t" style="left:537.70px;top:683.34px;font-size:12px;transform:scaleX(0.8680);">Data</div>
<div class="btn" style="left:519px;top:696px;width:46px;height:14px"></div>
<div class="t" style="left:525.00px;top:697.16px;font-size:12px;transform:scaleX(1.0197);">Hilight</div>
<div class="btn" style="left:511px;top:718px;width:64px;height:28px"></div>
<div class="t" style="left:515.50px;top:726.16px;font-size:12px;transform:scaleX(0.9371);">[3D] Image</div>
<div class="gb" style="left:576px;top:661px;width:55px;height:54px"></div>
<div class="a" style="left:582.0px;top:658.0px;width:32.7px;height:6px;background:#f0f0f0"></div>
<div class="t" style="left:583.00px;top:656.84px;font-size:12px;">Width</div>
<div class="rd" style="left:584px;top:675px"><div style="position:absolute;left:3px;top:3px;width:4px;height:4px;border-radius:2px;background:#000"></div></div>
<div class="t" style="left:601.50px;top:673.34px;font-size:12px;transform:scaleX(0.9087);">Part</div>
<div class="rd" style="left:584px;top:696px"></div>
<div class="t" style="left:601.50px;top:694.44px;font-size:12px;transform:scaleX(0.8932);">Entire</div>
<div class="btn" style="left:637px;top:659px;width:143px;height:17px"></div>
<div class="t" style="left:644.50px;top:661.66px;font-size:12px;transform:scaleX(0.9692);">Correction for absorption</div>
<div class="btn" style="left:637px;top:679px;width:103px;height:17px"></div>
<div class="t" style="left:647.00px;top:681.66px;font-size:12px;transform:scaleX(0.9427);">Noise Reduction</div>
<div class="btn" style="left:743px;top:679px;width:37px;height:17px"></div>
<div class="t" style="left:747.50px;top:681.66px;font-size:12px;transform:scaleX(0.8932);">Reset</div>
<div class="btn" style="left:793px;top:659px;width:35px;height:25px"></div>
<div class="t" style="left:796.50px;top:665.66px;font-size:12px;">close</div>
<div class="ck" style="left:636px;top:700px"><svg width="11" height="11" style="position:absolute;left:0;top:0"><path d="M2 5.2 L4.3 7.8 L9 2.6" stroke="#000" stroke-width="2" fill="none"/></svg></div>
<div class="t" style="left:653.00px;top:698.84px;font-size:12px;transform:scaleX(0.8662);">Information</div>
<div class="gb" style="left:735px;top:711px;width:95px;height:35px"></div>
<div class="a" style="left:741.0px;top:708.0px;width:36.7px;height:6px;background:#f0f0f0"></div>
<div class="t" style="left:742.00px;top:704.84px;font-size:12px;">Object</div>
<div class="a" style="left:779px;top:708px;width:40px;height:6px;background:#f0f0f0"></div>
<div class="ck" style="left:786px;top:698px"><svg width="11" height="11" style="position:absolute;left:0;top:0"><path d="M2 5.2 L4.3 7.8 L9 2.6" stroke="#000" stroke-width="2" fill="none"/></svg></div>
<div class="t" style="left:802.00px;top:695.84px;font-size:12px;">ID</div>
<div class="btn" style="left:741px;top:721px;width:19px;height:18px"></div>
<div class="t" style="left:746.50px;top:724.16px;font-size:12px;color:#a0a0a0;">A</div>
<div class="btn" style="left:763px;top:721px;width:19px;height:18px"></div>
<div class="t" style="left:768.50px;top:724.16px;font-size:12px;">B</div>
<div class="btn" style="left:785px;top:721px;width:20px;height:18px"></div>
<div class="t" style="left:790.67px;top:724.16px;font-size:12px;">C</div>
<div class="btn" style="left:807px;top:721px;width:18px;height:18px"></div>
<div class="t" style="left:812.66px;top:724.16px;font-size:12px;">L</div>
<div class="btn" style="left:625px;top:719px;width:105px;height:28px"></div>
<div class="t" style="left:637.50px;top:726.68px;font-size:13px;font-weight:bold;color:#101030;transform:scaleX(1.0254);">Make Report</div>
</div>
<div class="a" style="left:844px;top:9px;width:192px;height:796px;border-radius:8px;box-shadow:0 4px 16px rgba(0,0,0,.4)"></div>
<div class="a" style="left:0;top:0;width:1518px;height:873px;clip-path:inset(9px 482px 68px 844px round 8px)">
<div class="a" style="left:844px;top:9px;width:192px;height:796px;background:#f0f0f0;border:1px solid #a8a8a8;border-radius:8px"></div>
<div class="a" style="left:844px;top:9px;width:192px;height:26px;background:#f3f3f3;border-radius:8px 8px 0 0;border:1px solid #a8a8a8;border-bottom:none"></div>
<svg class="a" style="left:847px;top:13px" width="16" height="16" viewBox="0 0 16 16"><rect x="0" y="0.5" width="16" height="15" fill="#000088"/><rect x="0" y="0.5" width="4.5" height="7" fill="#0000f0"/><rect x="0" y="9" width="3" height="6" fill="#0000e0"/><rect x="7" y="2" width="3" height="2" fill="#0000ff"/><rect x="12" y="5" width="3" height="3" fill="#0000ff"/><rect x="12" y="10" width="4" height="3" fill="#0000ff"/><rect x="0" y="0.5" width="2" height="1" fill="#000"/><rect x="2" y="14.5" width="6" height="1.5" fill="#000"/><rect x="4" y="0.5" width="2" height="14" fill="#ffff00"/><rect x="0" y="8" width="16" height="1.6" fill="#ffff00"/><polygon points="5,4.8 7,6.8 9.5,8.8 7,10.8 5,12.5 3,10.8 1,8.8 3,6.8" fill="#ffff00"/><g fill="#e8e8e8"><rect x="2.0" y="1.9" width="1" height="1"/><rect x="9.9" y="1.0" width="1" height="1"/><rect x="11.9" y="1.0" width="1" height="1"/><rect x="14.0" y="2.0" width="1" height="1"/><rect x="1.0" y="12.0" width="1" height="1"/><rect x="2.0" y="13.0" width="1" height="1"/><rect x="8.0" y="13.0" width="1" height="1"/><rect x="10.0" y="13.0" width="1" height="1"/><rect x="12.0" y="12.0" width="1" height="1"/><rect x="14.0" y="13.0" width="1" height="1"/><rect x="6.0" y="14.0" width="1" height="1"/></g></svg>
<div class="t" style="left:868.40px;top:15.44px;font-size:12px;color:#8a8a8a;">Fre...</div>
<svg class="a" style="left:0;top:0;overflow:visible" width="1" height="1"><line x1="917" y1="21.5" x2="927" y2="21.5" stroke="#888" stroke-width="1"/><rect x="962.5" y="16.5" width="9" height="9" rx="1.5" fill="none" stroke="#888" stroke-width="1"/><path d="M1008 16.0 L1018 26.0 M1018 16.0 L1008 26.0" stroke="#888" stroke-width="1"/></svg>
<div class="gb" style="left:845px;top:40px;width:183px;height:51px"></div>
<div class="t" style="left:852.60px;top:33.50px;font-size:13px;font-weight:bold;transform:scaleX(0.9271);background:#f0f0f0;">Spectral Effect</div>
<div class="t" style="left:852.60px;top:50.14px;font-size:12px;">CCD</div>
<div class="ed" style="left:884px;top:46.6px;width:87px;height:18.800000000000004px;background:#fff"></div>
<div class="t" style="left:887.00px;top:50.16px;font-size:12px;">IMX290</div>
<div class="btn" style="left:954px;top:48.6px;width:15px;height:14.800000000000004px"></div>
<svg class="a" style="left:0;top:0;overflow:visible" width="1" height="1"><polygon points="957.5,54.0 965.5,54.0 961.5,58.0" fill="#000"/></svg>
<div class="btn" style="left:974px;top:46.6px;width:47px;height:15.799999999999997px"></div>
<div class="t" style="left:983.00px;top:48.66px;font-size:12px;transform:scaleX(0.8695);">Graph</div>
<div class="t" style="left:852.60px;top:74.24px;font-size:12px;">Star</div>
<div class="ed" style="left:884px;top:69.5px;width:47px;height:19.0px;background:#fff"></div>
<div class="t" style="left:887.00px;top:73.16px;font-size:12px;">G2</div>
<div class="btn" style="left:914px;top:71.5px;width:15px;height:15.0px"></div>
<svg class="a" style="left:0;top:0;overflow:visible" width="1" height="1"><polygon points="917.5,77.0 925.5,77.0 921.5,81.0" fill="#000"/></svg>
<div class="t" style="left:934.60px;top:74.24px;font-size:12px;">or</div>
<div class="t" style="left:949.30px;top:74.24px;font-size:12px;transform:scaleX(0.8497);">B-V</div>
<div class="ed" style="left:972px;top:70.6px;width:48px;height:19.0px;background:#fff"></div>
<div class="t" style="left:975.00px;top:74.26px;font-size:12px;">0.68</div>
<div class="gb" style="left:845px;top:98.4px;width:183px;height:43.599999999999994px"></div>
<div class="t" style="left:852.60px;top:91.60px;font-size:13px;font-weight:bold;transform:scaleX(0.9075);background:#f0f0f0;">Object's Movement</div>
<div class="t" style="left:852.60px;top:104.44px;font-size:12px;transform:scaleX(0.8953);">Distance</div>
<div class="t" style="left:938.70px;top:104.44px;font-size:12px;transform:scaleX(0.8874);">Shadow's Velocity</div>
<div class="ed" style="left:852.4px;top:118.3px;width:71.60000000000002px;height:19.700000000000003px;background:#fff"></div>
<div class="t" style="left:855.40px;top:121.24px;font-size:12px;transform:scaleX(0.8824);">590492715</div>
<div class="t" style="left:924.50px;top:127.84px;font-size:12px;">km</div>
<div class="ed" style="left:948.6px;top:118.3px;width:47.39999999999998px;height:19.700000000000003px;background:#fff"></div>
<div class="t" style="left:951.60px;top:121.24px;font-size:12px;transform:scaleX(0.8761);">14242.4</div>
<div class="t" style="left:996.70px;top:127.84px;font-size:12px;transform:scaleX(0.9374);">m/sec</div>
<div class="gb" style="left:845px;top:148.2px;width:183px;height:106.60000000000002px"></div>
<div class="t" style="left:852.60px;top:141.60px;font-size:13px;font-weight:bold;transform:scaleX(0.8971);background:#f0f0f0;">Frame range of Star &amp; BKG</div>
<div class="t" style="left:852.00px;top:154.54px;font-size:12px;transform:scaleX(0.8962);">Appearance</div>
<div class="t" style="left:917.00px;top:154.40px;font-size:13px;font-weight:bold;transform:scaleX(0.8810);">before</div>
<div class="t" style="left:959.60px;top:154.40px;font-size:13px;font-weight:bold;transform:scaleX(0.9052);">Step</div>
<div class="t" style="left:996.00px;top:154.40px;font-size:13px;font-weight:bold;transform:scaleX(0.8872);">after</div>
<div class="ed" style="left:852.4px;top:168.9px;width:39.10000000000002px;height:18.5px;background:#fff"></div>
<div class="t" style="left:855.40px;top:172.34px;font-size:12px;transform:scaleX(0.8719);">1894.9</div>
<div class="btn" style="left:894.3px;top:168.6px;width:22.40000000000009px;height:15.700000000000017px"></div>
<div class="t" style="left:897.50px;top:170.61px;font-size:12px;">Fix</div>
<div class="ed" style="left:925.5px;top:169.6px;width:28.5px;height:18.80000000000001px;background:#fff"></div>
<div class="t" style="left:928.50px;top:172.84px;font-size:12px;">-11</div>
<div class="btn" style="left:925.5px;top:189.8px;width:15.75px;height:15.899999999999977px"></div>
<svg class="a" style="left:0;top:0;overflow:visible" width="1" height="1"><polygon points="935.375,193.75 935.375,201.75 931.375,197.75" fill="#000"/></svg>
<div class="btn" style="left:941.25px;top:189.8px;width:15.75px;height:15.899999999999977px"></div>
<svg class="a" style="left:0;top:0;overflow:visible" width="1" height="1"><polygon points="947.125,193.75 947.125,201.75 951.125,197.75" fill="#000"/></svg>
<div class="ed" style="left:925.5px;top:212.8px;width:28.5px;height:17.899999999999977px;background:#fff"></div>
<div class="t" style="left:928.50px;top:215.84px;font-size:12px;">-30</div>
<div class="btn" style="left:925.5px;top:233.2px;width:15.75px;height:16.100000000000023px"></div>
<svg class="a" style="left:0;top:0;overflow:visible" width="1" height="1"><polygon points="935.375,237.25 935.375,245.25 931.375,241.25" fill="#000"/></svg>
<div class="btn" style="left:941.25px;top:233.2px;width:15.75px;height:16.100000000000023px"></div>
<svg class="a" style="left:0;top:0;overflow:visible" width="1" height="1"><polygon points="947.125,237.25 947.125,245.25 951.125,241.25" fill="#000"/></svg>
<div class="ed" style="left:961px;top:169.6px;width:27px;height:18.80000000000001px;background:#fff"></div>
<div class="t" style="left:964.00px;top:172.84px;font-size:12px;">0</div>
<div class="btn" style="left:961px;top:189.8px;width:15.0px;height:15.899999999999977px"></div>
<svg class="a" style="left:0;top:0;overflow:visible" width="1" height="1"><polygon points="970.5,193.75 970.5,201.75 966.5,197.75" fill="#000"/></svg>
<div class="btn" style="left:976.0px;top:189.8px;width:15.0px;height:15.899999999999977px"></div>
<svg class="a" style="left:0;top:0;overflow:visible" width="1" height="1"><polygon points="981.5,193.75 981.5,201.75 985.5,197.75" fill="#000"/></svg>
<div class="ed" style="left:961px;top:212.8px;width:27px;height:17.899999999999977px;background:#fff"></div>
<div class="t" style="left:964.00px;top:215.84px;font-size:12px;">0</div>
<div class="btn" style="left:961px;top:233.2px;width:15.0px;height:16.100000000000023px"></div>
<svg class="a" style="left:0;top:0;overflow:visible" width="1" height="1"><polygon points="970.5,237.25 970.5,245.25 966.5,241.25" fill="#000"/></svg>
<div class="btn" style="left:976.0px;top:233.2px;width:15.0px;height:16.100000000000023px"></div>
<svg class="a" style="left:0;top:0;overflow:visible" width="1" height="1"><polygon points="981.5,237.25 981.5,245.25 985.5,241.25" fill="#000"/></svg>
<div class="ed" style="left:997px;top:169.6px;width:24.399999999999977px;height:18.80000000000001px;background:#fff"></div>
<div class="t" style="left:1000.00px;top:172.84px;font-size:12px;">30</div>
<div class="btn" style="left:997px;top:189.8px;width:13.700000000000045px;height:15.899999999999977px"></div>
<svg class="a" style="left:0;top:0;overflow:visible" width="1" height="1"><polygon points="1005.85,193.75 1005.85,201.75 1001.85,197.75" fill="#000"/></svg>
<div class="btn" style="left:1010.7px;top:189.8px;width:13.700000000000045px;height:15.899999999999977px"></div>
<svg class="a" style="left:0;top:0;overflow:visible" width="1" height="1"><polygon points="1015.5500000000001,193.75 1015.5500000000001,201.75 1019.5500000000001,197.75" fill="#000"/></svg>
<div class="ed" style="left:997px;top:212.8px;width:24.399999999999977px;height:17.899999999999977px;background:#fff"></div>
<div class="t" style="left:1000.00px;top:215.84px;font-size:12px;">11</div>
<div class="btn" style="left:997px;top:233.2px;width:13.700000000000045px;height:16.100000000000023px"></div>
<svg class="a" style="left:0;top:0;overflow:visible" width="1" height="1"><polygon points="1005.85,237.25 1005.85,245.25 1001.85,241.25" fill="#000"/></svg>
<div class="btn" style="left:1010.7px;top:233.2px;width:13.700000000000045px;height:16.100000000000023px"></div>
<svg class="a" style="left:0;top:0;overflow:visible" width="1" height="1"><polygon points="1015.5500000000001,237.25 1015.5500000000001,245.25 1019.5500000000001,241.25" fill="#000"/></svg>
<div class="t" style="left:852.00px;top:186.24px;font-size:12px;transform:scaleX(0.8693);">Intermidiate</div>
<div class="ed" style="left:852.4px;top:199.4px;width:39.10000000000002px;height:17.599999999999994px;background:#fff"></div>
<div class="t" style="left:855.40px;top:202.84px;font-size:12px;transform:scaleX(0.8719);">1541.0</div>
<div class="ck" style="left:894.7px;top:201.2px"></div>
<div class="t" style="left:912.20px;top:198.54px;font-size:12px;">D</div>
<div class="t" style="left:852.00px;top:217.84px;font-size:12px;transform:scaleX(0.8858);">Disappearance</div>
<div class="ed" style="left:852.4px;top:231.8px;width:39.10000000000002px;height:17.5px;background:#fff"></div>
<div class="t" style="left:855.40px;top:234.84px;font-size:12px;transform:scaleX(0.8719);">1803.8</div>
<div class="btn" style="left:894.3px;top:232.4px;width:22.40000000000009px;height:16.19999999999999px"></div>
<div class="t" style="left:897.50px;top:234.66px;font-size:12px;">Fix</div>
<div class="gb" style="left:845px;top:263.7px;width:183px;height:46.5px"></div>
<div class="t" style="left:852.60px;top:257.60px;font-size:13px;font-weight:bold;transform:scaleX(0.9040);background:#f0f0f0;">Frame Range for Processing</div>
<div class="ed" style="left:852.6px;top:274.7px;width:31.100000000000023px;height:17.30000000000001px;background:#fff"></div>
<div class="t" style="left:855.60px;top:277.84px;font-size:12px;">-20</div>
<div class="btn" style="left:852.6px;top:292.6px;width:16.100000000000023px;height:15.099999999999966px"></div>
<svg class="a" style="left:0;top:0;overflow:visible" width="1" height="1"><polygon points="862.6500000000001,296.15 862.6500000000001,304.15 858.6500000000001,300.15" fill="#000"/></svg>
<div class="btn" style="left:868.7px;top:292.6px;width:16.09999999999991px;height:15.099999999999966px"></div>
<svg class="a" style="left:0;top:0;overflow:visible" width="1" height="1"><polygon points="874.75,296.15 874.75,304.15 878.75,300.15" fill="#000"/></svg>
<div class="ed" style="left:900.5px;top:274.7px;width:30.899999999999977px;height:17.30000000000001px;background:#fff"></div>
<div class="t" style="left:903.50px;top:277.84px;font-size:12px;">20</div>
<div class="btn" style="left:900.5px;top:292.6px;width:16.049999999999955px;height:15.099999999999966px"></div>
<svg class="a" style="left:0;top:0;overflow:visible" width="1" height="1"><polygon points="910.525,296.15 910.525,304.15 906.525,300.15" fill="#000"/></svg>
<div class="btn" style="left:916.55px;top:292.6px;width:16.050000000000068px;height:15.099999999999966px"></div>
<svg class="a" style="left:0;top:0;overflow:visible" width="1" height="1"><polygon points="922.575,296.15 922.575,304.15 926.575,300.15" fill="#000"/></svg>
<div class="ck" style="left:948.6px;top:274.7px"><svg width="11" height="11" style="position:absolute;left:0;top:0"><path d="M2 5.2 L4.3 7.8 L9 2.6" stroke="#000" stroke-width="2" fill="none"/></svg></div>
<div class="t" style="left:966.50px;top:273.54px;font-size:12px;transform:scaleX(0.8773);">SelectArea</div>
<div class="t" style="left:940.80px;top:294.84px;font-size:12px;transform:scaleX(0.8780);">DataNum</div>
<div class="ed" style="left:988.5px;top:289.2px;width:30.899999999999977px;height:18.30000000000001px;background:#fff"></div>
<div class="t" style="left:991.50px;top:291.00px;font-size:13px;font-weight:bold;">41</div>
<div class="gb" style="left:845px;top:317.4px;width:183px;height:122.60000000000002px"></div>
<div class="t" style="left:852.60px;top:311.60px;font-size:13px;font-weight:bold;transform:scaleX(0.9225);background:#f0f0f0;">Central Time of  Event</div>
<div class="t" style="left:852.60px;top:327.70px;font-size:13px;font-weight:bold;transform:scaleX(0.9092);">Component 1  [Single Star]</div>
<div class="t" style="left:852.60px;top:342.64px;font-size:12px;transform:scaleX(0.8477);">Frame Number</div>
<div class="t" style="left:940.80px;top:342.64px;font-size:12px;transform:scaleX(0.8752);">Offset Time</div>
<div class="ed" style="left:852.6px;top:356.9px;width:63.39999999999998px;height:18.900000000000034px;background:#fff"></div>
<div class="t" style="left:855.60px;top:359.00px;font-size:13px;font-weight:bold;transform:scaleX(1.0060);">1020.0</div>
<div class="t" style="left:925.20px;top:361.54px;font-size:12px;font-weight:bold;">+</div>
<div class="ed" style="left:936.2px;top:356.6px;width:43.799999999999955px;height:19.399999999999977px;background:#fff"></div>
<div class="a" style="left:938px;top:358px;width:40px;height:16px;overflow:hidden"><div class="t" style="left:1.20px;top:1.00px;font-size:13px;font-weight:bold;transform:scaleX(1.0433);">-1212.0</div></div>
<div class="t" style="left:986.80px;top:364.54px;font-size:12px;transform:scaleX(0.8545);">msec</div>
<div class="t" style="left:852.60px;top:382.74px;font-size:12px;transform:scaleX(0.8412);">Error(1 sigma)</div>
<div class="t" style="left:921.00px;top:382.74px;font-size:12px;font-weight:bold;transform:scaleX(0.9415);">+/-</div>
<div class="ed" style="left:936.2px;top:376.8px;width:43.799999999999955px;height:18.599999999999966px;background:#fff"></div>
<div class="t" style="left:939.20px;top:378.90px;font-size:13px;font-weight:bold;transform:scaleX(0.9837);">344.7</div>
<div class="t" style="left:986.80px;top:382.44px;font-size:12px;transform:scaleX(0.8545);">msec</div>
<div class="a" style="left:852px;top:400.2px;width:169px;height:1px;background:#9fc3e7"></div>
<div class="t" style="left:852.60px;top:402.50px;font-size:13px;font-weight:bold;transform:scaleX(0.9174);">Component 2   [Double Star]</div>
<div class="t" style="left:860.60px;top:422.34px;font-size:12px;transform:scaleX(0.8752);">Offset Time</div>
<div class="t" style="left:925.20px;top:420.84px;font-size:12px;font-weight:bold;">+</div>
<div class="ed" style="left:936.2px;top:418px;width:32.799999999999955px;height:18.899999999999977px;background:#fff"></div>
<div class="t" style="left:972.60px;top:422.34px;font-size:12px;transform:scaleX(0.8593);">millisecond</div>
<div class="gb" style="left:845px;top:447.3px;width:183px;height:45.69999999999999px"></div>
<div class="t" style="left:852.60px;top:441.40px;font-size:13px;font-weight:bold;transform:scaleX(0.9187);background:#f0f0f0;">Speed of Fresnel Pattern</div>
<div class="t" style="left:852.60px;top:457.84px;font-size:12px;">Rate</div>
<div class="t" style="left:931.40px;top:457.84px;font-size:12px;transform:scaleX(0.8900);">Contact Angle</div>
<div class="ed" style="left:852.6px;top:470.7px;width:47.19999999999993px;height:18.900000000000034px;background:#fff"></div>
<div class="t" style="left:855.60px;top:472.40px;font-size:13px;font-weight:bold;transform:scaleX(0.9809);">1.0000</div>
<div class="ed" style="left:932.4px;top:470.7px;width:47.60000000000002px;height:18.900000000000034px;background:#fff"></div>
<div class="t" style="left:935.40px;top:472.40px;font-size:13px;font-weight:bold;">0.0</div>
<div class="t" style="left:988.70px;top:477.34px;font-size:12px;transform:scaleX(0.8698);">degree</div>
<div class="gb" style="left:845px;top:500.5px;width:183px;height:65.29999999999995px"></div>
<div class="a" style="left:850px;top:496px;width:150px;height:13px;background:#f0f0f0"></div>
<div class="ck" style="left:852.6px;top:497.8px"></div>
<div class="t" style="left:871.00px;top:495.70px;font-size:13px;font-weight:bold;transform:scaleX(0.9042);">Double Star Analyzing</div>
<div class="t" style="left:852.60px;top:511.04px;font-size:12px;transform:scaleX(0.8834);">Step Hight</div>
<div class="t" style="left:941.00px;top:511.04px;font-size:12px;transform:scaleX(0.8807);">Time Difference</div>
<div class="btn" style="left:853px;top:527.4px;width:15.5px;height:11.800000000000068px"></div>
<svg class="a" style="left:0;top:0;overflow:visible" width="1" height="1"><polygon points="857.25,535.05 864.25,535.05 860.75,531.55" fill="#a0a0a0"/></svg>
<div class="btn" style="left:853px;top:539.2px;width:15.5px;height:11.799999999999955px"></div>
<svg class="a" style="left:0;top:0;overflow:visible" width="1" height="1"><polygon points="857.25,543.35 864.25,543.35 860.75,546.85" fill="#a0a0a0"/></svg>
<div class="btn" style="left:870px;top:527.4px;width:15.5px;height:11.800000000000068px"></div>
<svg class="a" style="left:0;top:0;overflow:visible" width="1" height="1"><polygon points="874.25,535.05 881.25,535.05 877.75,531.55" fill="#a0a0a0"/></svg>
<div class="btn" style="left:870px;top:539.2px;width:15.5px;height:11.799999999999955px"></div>
<svg class="a" style="left:0;top:0;overflow:visible" width="1" height="1"><polygon points="874.25,543.35 881.25,543.35 877.75,546.85" fill="#a0a0a0"/></svg>
<div class="ed" style="left:885.4px;top:527.4px;width:28.600000000000023px;height:19.200000000000045px;background:#fafafa"></div>
<div class="t" style="left:888.40px;top:530.84px;font-size:12px;color:#a0a0a0;">50.0</div>
<div class="t" style="left:908.00px;top:543.38px;font-size:9px;">%</div>
<div class="t" style="left:857.00px;top:551.54px;font-size:12px;">1</div>
<div class="t" style="left:870.50px;top:551.54px;font-size:12px;">0.1</div>
<div class="btn" style="left:924px;top:527.4px;width:15.5px;height:11.800000000000068px"></div>
<svg class="a" style="left:0;top:0;overflow:visible" width="1" height="1"><polygon points="928.25,535.05 935.25,535.05 931.75,531.55" fill="#a0a0a0"/></svg>
<div class="btn" style="left:924px;top:539.2px;width:15.5px;height:11.799999999999955px"></div>
<svg class="a" style="left:0;top:0;overflow:visible" width="1" height="1"><polygon points="928.25,543.35 935.25,543.35 931.75,546.85" fill="#a0a0a0"/></svg>
<div class="btn" style="left:940px;top:527.4px;width:15.5px;height:11.800000000000068px"></div>
<svg class="a" style="left:0;top:0;overflow:visible" width="1" height="1"><polygon points="944.25,535.05 951.25,535.05 947.75,531.55" fill="#a0a0a0"/></svg>
<div class="btn" style="left:940px;top:539.2px;width:15.5px;height:11.799999999999955px"></div>
<svg class="a" style="left:0;top:0;overflow:visible" width="1" height="1"><polygon points="944.25,543.35 951.25,543.35 947.75,546.85" fill="#a0a0a0"/></svg>
<div class="btn" style="left:956px;top:527.4px;width:15.5px;height:11.800000000000068px"></div>
<svg class="a" style="left:0;top:0;overflow:visible" width="1" height="1"><polygon points="960.25,535.05 967.25,535.05 963.75,531.55" fill="#a0a0a0"/></svg>
<div class="btn" style="left:956px;top:539.2px;width:15.5px;height:11.799999999999955px"></div>
<svg class="a" style="left:0;top:0;overflow:visible" width="1" height="1"><polygon points="960.25,543.35 967.25,543.35 963.75,546.85" fill="#a0a0a0"/></svg>
<div class="ed" style="left:973px;top:527.4px;width:46.799999999999955px;height:19.200000000000045px;background:#fafafa"></div>
<div class="t" style="left:976.00px;top:530.84px;font-size:12px;color:#a0a0a0;">0</div>
<div class="t" style="left:972.60px;top:547.44px;font-size:12px;transform:scaleX(0.8593);">millisecond</div>
<div class="gb" style="left:845px;top:572.6px;width:183px;height:52.799999999999955px"></div>
<div class="a" style="left:850px;top:568px;width:160px;height:13px;background:#f0f0f0"></div>
<div class="ck" style="left:853.3px;top:569.4px"><svg width="11" height="11" style="position:absolute;left:0;top:0"><path d="M2 5.2 L4.3 7.8 L9 2.6" stroke="#000" stroke-width="2" fill="none"/></svg></div>
<div class="t" style="left:872.70px;top:568.00px;font-size:13px;font-weight:bold;transform:scaleX(0.9035);">Star's Angular Diameter</div>
<div class="btn" style="left:853px;top:584px;width:15.5px;height:11.649999999999977px"></div>
<svg class="a" style="left:0;top:0;overflow:visible" width="1" height="1"><polygon points="857.25,591.575 864.25,591.575 860.75,588.075" fill="#a0a0a0"/></svg>
<div class="btn" style="left:853px;top:595.65px;width:15.5px;height:11.649999999999977px"></div>
<svg class="a" style="left:0;top:0;overflow:visible" width="1" height="1"><polygon points="857.25,599.7249999999999 864.25,599.7249999999999 860.75,603.2249999999999" fill="#a0a0a0"/></svg>
<div class="ed" style="left:870px;top:584.1px;width:30.5px;height:18.699999999999932px;background:#fafafa"></div>
<div class="t" style="left:873.00px;top:586.84px;font-size:12px;color:#a0a0a0;">0.1</div>
<div class="t" style="left:901.90px;top:587.74px;font-size:12px;transform:scaleX(0.8888);">milli arc second</div>
<div class="t" style="left:861.30px;top:610.54px;font-size:12px;transform:scaleX(0.8865);">Intensity at event centre:</div>
<div class="ed" style="left:981.6px;top:603.8px;width:30.899999999999977px;height:18.600000000000023px;background:#fafafa"></div>
<div class="t" style="left:984.60px;top:605.20px;font-size:13px;font-weight:bold;color:#909090;">26.5</div>
<div class="t" style="left:1013.90px;top:610.54px;font-size:12px;transform:scaleX(0.6560);">%</div>
<div class="gb" style="left:845px;top:633.1px;width:183px;height:48.10000000000002px"></div>
<div class="t" style="left:852.60px;top:626.80px;font-size:13px;font-weight:bold;transform:scaleX(0.8790);background:#f0f0f0;">Processing</div>
<div class="rd" style="left:853.3px;top:644.4px"><div style="position:absolute;left:3px;top:3px;width:4px;height:4px;border-radius:2px;background:#000"></div></div>
<div class="t" style="left:870.50px;top:643.54px;font-size:12px;transform:scaleX(0.9048);">for Occultation</div>
<div class="rd" style="left:949.3px;top:644.4px"></div>
<div class="t" style="left:966.50px;top:643.54px;font-size:12px;transform:scaleX(0.8845);">for Grazing</div>
<div class="t" style="left:850.70px;top:663.34px;font-size:12px;transform:scaleX(0.8506);">Sum-Squared Error</div>
<div class="ed" style="left:942.4px;top:658.8px;width:79.30000000000007px;height:18.800000000000068px;background:#fff"></div>
<div class="t" style="left:945.40px;top:660.20px;font-size:13px;font-weight:bold;transform:scaleX(0.9880);">2676269</div>
<div class="ck" style="left:846.7px;top:690.4px"></div>
<div class="t" style="left:864.60px;top:689.24px;font-size:12px;transform:scaleX(0.8778);">Mag drop</div>
<div class="ed" style="left:914.5px;top:686.7px;width:39.5px;height:18.59999999999991px;background:#fff"></div>
<div class="t" style="left:917.50px;top:689.84px;font-size:12px;">8.0</div>
<div class="t" style="left:960.60px;top:689.24px;font-size:12px;transform:scaleX(0.8773);">considered</div>
<div class="a" style="left:848px;top:708px;width:176px;height:9px;background:#e6e6e6;border-top:1px solid #a0a0a0;border-left:1px solid #a0a0a0;border-right:1px solid #fff;border-bottom:1px solid #fff"></div>
<div class="a" style="left:848px;top:720px;width:177px;height:25px;border:1px solid #404040"></div>
<div class="btn" style="left:849px;top:721px;width:175px;height:23px"></div>
<div class="t" style="left:872.35px;top:724.80px;font-size:13px;font-weight:bold;transform:scaleX(0.9110);">Fit to Diffraction Curve</div>
<div class="ck" style="left:852.7px;top:753.3px"><svg width="11" height="11" style="position:absolute;left:0;top:0"><path d="M2 5.2 L4.3 7.8 L9 2.6" stroke="#000" stroke-width="2" fill="none"/></svg></div>
<div class="t" style="left:870.50px;top:752.44px;font-size:12px;transform:scaleX(0.8808);">Pop up</div>
<div class="btn" style="left:908.2px;top:748.5px;width:114.79999999999995px;height:21.100000000000023px"></div>
<div class="t" style="left:921.90px;top:751.60px;font-size:13px;font-weight:bold;transform:scaleX(0.9098);">Magnitude Calc</div>
<div class="a" style="left:844px;top:773px;width:185px;height:1px;background:#a0a0a0"></div>
<div class="a" style="left:844px;top:774px;width:185px;height:1px;background:#fff"></div>
<div class="ck" style="left:892px;top:780.5px"></div>
<div class="t" style="left:910.40px;top:779.84px;font-size:12px;transform:scaleX(0.9144);">More</div>
</div>
<div class="a" style="left:1042px;top:10px;width:467px;height:855px;border-radius:8px;box-shadow:0 4px 16px rgba(0,0,0,.4)"></div>
<div class="a" style="left:0;top:0;width:1518px;height:873px;clip-path:inset(10px 9px 8px 1042px round 8px)">
<div class="a" style="left:1042px;top:10px;width:467px;height:855px;background:#f0f0f0;border:1px solid #a8a8a8;border-radius:8px"></div>
<div class="a" style="left:1042px;top:10px;width:467px;height:30px;background:#f3f3f3;border-radius:8px 8px 0 0;border:1px solid #a8a8a8;border-bottom:none"></div>
<svg class="a" style="left:1050px;top:16px" width="16" height="16" viewBox="0 0 16 16"><rect x="0" y="0.5" width="16" height="15" fill="#000088"/><rect x="0" y="0.5" width="4.5" height="7" fill="#0000f0"/><rect x="0" y="9" width="3" height="6" fill="#0000e0"/><rect x="7" y="2" width="3" height="2" fill="#0000ff"/><rect x="12" y="5" width="3" height="3" fill="#0000ff"/><rect x="12" y="10" width="4" height="3" fill="#0000ff"/><rect x="0" y="0.5" width="2" height="1" fill="#000"/><rect x="2" y="14.5" width="6" height="1.5" fill="#000"/><rect x="4" y="0.5" width="2" height="14" fill="#ffff00"/><rect x="0" y="8" width="16" height="1.6" fill="#ffff00"/><polygon points="5,4.8 7,6.8 9.5,8.8 7,10.8 5,12.5 3,10.8 1,8.8 3,6.8" fill="#ffff00"/><g fill="#e8e8e8"><rect x="2.0" y="1.9" width="1" height="1"/><rect x="9.9" y="1.0" width="1" height="1"/><rect x="11.9" y="1.0" width="1" height="1"/><rect x="14.0" y="2.0" width="1" height="1"/><rect x="1.0" y="12.0" width="1" height="1"/><rect x="2.0" y="13.0" width="1" height="1"/><rect x="8.0" y="13.0" width="1" height="1"/><rect x="10.0" y="13.0" width="1" height="1"/><rect x="12.0" y="12.0" width="1" height="1"/><rect x="14.0" y="13.0" width="1" height="1"/><rect x="6.0" y="14.0" width="1" height="1"/></g></svg>
<div class="t" style="left:1072.00px;top:18.44px;font-size:12px;color:#000;">Magnitude &amp; Event time Calculator</div>
<svg class="a" style="left:0;top:0;overflow:visible" width="1" height="1"><line x1="1389" y1="24.5" x2="1399" y2="24.5" stroke="#000" stroke-width="1"/><rect x="1434.5" y="19.5" width="9" height="9" rx="1.5" fill="none" stroke="#000" stroke-width="1"/><path d="M1481 19.0 L1491 29.0 M1491 19.0 L1481 29.0" stroke="#000" stroke-width="1"/></svg>
<div class="gb" style="left:1043px;top:45.7px;width:141.5px;height:38.7px"></div>
<div class="t" style="left:1050.70px;top:39.90px;font-size:13px;font-weight:bold;transform:scaleX(0.9000);background:#f0f0f0;">Selection for analysis</div>
<div class="rd" style="left:1050.8px;top:53.2px"><div style="position:absolute;left:3px;top:3px;width:4px;height:4px;border-radius:2px;background:#000"></div></div>
<div class="t" style="left:1069.00px;top:53.30px;font-size:13px;font-weight:bold;transform:scaleX(0.9215);">Timing only</div>
<div class="rd" style="left:1050.8px;top:67.2px"></div>
<div class="t" style="left:1069.00px;top:67.70px;font-size:13px;font-weight:bold;transform:scaleX(0.8938);">Doublestar and time</div>
<div class="t" style="left:1110.70px;top:89.65px;font-size:14px;transform:scaleX(1.1704);">First Event</div>
<div class="t" style="left:1090.60px;top:113.55px;font-size:14px;transform:scaleX(1.1483);">Second Event</div>
<div class="t" style="left:1122.70px;top:139.70px;font-size:13px;font-weight:bold;transform:scaleX(0.9016);">Combined</div>
<div class="gb" style="left:1192.6px;top:46.1px;width:140.80000000000018px;height:116.20000000000002px"></div>
<div class="t" style="left:1200.40px;top:39.90px;font-size:13px;font-weight:bold;transform:scaleX(0.9094);background:#f0f0f0;">Statistic Calculation</div>
<div class="t" style="left:1211.60px;top:53.35px;font-size:14px;transform:scaleX(1.0357);">Luminous Intensity</div>
<div class="t" style="left:1208.40px;top:67.84px;font-size:12px;transform:scaleX(0.9308);">Average</div>
<div class="t" style="left:1266.30px;top:67.84px;font-size:12px;transform:scaleX(0.9313);">Error Margin</div>
<div class="ed" style="left:1202px;top:82px;width:47.799999999999955px;height:19.799999999999997px;background:#fff"></div>
<div class="t" style="left:1205.00px;top:85.80px;font-size:13px;transform:scaleX(0.9200);">262.8</div>
<div class="t" style="left:1254.50px;top:86.84px;font-size:12px;font-weight:bold;transform:scaleX(0.9764);">+/-</div>
<div class="ed" style="left:1280.6px;top:82px;width:41.40000000000009px;height:19.799999999999997px;background:#fff"></div>
<div class="t" style="left:1283.60px;top:85.80px;font-size:13px;transform:scaleX(0.9200);">77.6</div>
<div class="ed" style="left:1202px;top:105.6px;width:47.799999999999955px;height:19.10000000000001px;background:#fff"></div>
<div class="t" style="left:1205.00px;top:108.70px;font-size:13px;transform:scaleX(0.9200);">353.9</div>
<div class="t" style="left:1254.50px;top:110.74px;font-size:12px;font-weight:bold;transform:scaleX(0.9764);">+/-</div>
<div class="ed" style="left:1280.6px;top:105.6px;width:41.40000000000009px;height:19.10000000000001px;background:#fff"></div>
<div class="t" style="left:1283.60px;top:108.70px;font-size:13px;transform:scaleX(0.9200);">74.3</div>
<div class="ed" style="left:1202px;top:136.2px;width:47.799999999999955px;height:19.700000000000017px;background:#fff"></div>
<div class="t" style="left:1205.00px;top:139.90px;font-size:13px;transform:scaleX(0.9200);">91.1</div>
<div class="t" style="left:1254.50px;top:139.34px;font-size:12px;font-weight:bold;transform:scaleX(0.9764);">+/-</div>
<div class="ed" style="left:1280.6px;top:136.2px;width:41.40000000000009px;height:19.700000000000017px;background:#fff"></div>
<div class="t" style="left:1283.60px;top:139.90px;font-size:13px;transform:scaleX(0.9200);">151.9</div>
<div class="gb" style="left:1342px;top:46.1px;width:142.5999999999999px;height:81.19999999999999px"></div>
<div class="t" style="left:1350.00px;top:39.90px;font-size:13px;font-weight:bold;transform:scaleX(0.8758);background:#f0f0f0;">Estimation</div>
<div class="t" style="left:1365.90px;top:55.65px;font-size:14px;font-weight:bold;">Magnitude</div>
<div class="t" style="left:1360.20px;top:67.84px;font-size:12px;transform:scaleX(0.8246);">Mag.</div>
<div class="t" style="left:1416.20px;top:67.84px;font-size:12px;transform:scaleX(0.9253);">Error Margin</div>
<div class="ed" style="left:1358px;top:82px;width:39.700000000000045px;height:19.799999999999997px;background:#fff"></div>
<div class="t" style="left:1361.00px;top:85.80px;font-size:13px;transform:scaleX(0.9200);">10.85</div>
<div class="t" style="left:1403.40px;top:86.84px;font-size:12px;font-weight:bold;transform:scaleX(0.9764);">+/-</div>
<div class="ed" style="left:1430.2px;top:82px;width:39.09999999999991px;height:19.799999999999997px;background:#fff"></div>
<div class="t" style="left:1433.20px;top:85.80px;font-size:13px;transform:scaleX(0.9200);">1.08</div>
<div class="ed" style="left:1358px;top:105.6px;width:39.700000000000045px;height:19.10000000000001px;background:#fff"></div>
<div class="t" style="left:1361.00px;top:108.70px;font-size:13px;transform:scaleX(0.9200);">10.53</div>
<div class="t" style="left:1403.40px;top:110.74px;font-size:12px;font-weight:bold;transform:scaleX(0.9764);">+/-</div>
<div class="ed" style="left:1430.2px;top:105.6px;width:39.09999999999991px;height:19.10000000000001px;background:#fff"></div>
<div class="t" style="left:1433.20px;top:108.70px;font-size:13px;transform:scaleX(0.9200);">1.07</div>
<div class="t" style="left:1341.00px;top:129.60px;font-size:13px;font-weight:bold;transform:scaleX(0.9530);">Assuming Pair's Mag. as:</div>
<div class="ed" style="left:1357px;top:147px;width:39.09999999999991px;height:18.400000000000006px;background:#fff"></div>
<div class="t" style="left:1360.00px;top:149.40px;font-size:13px;transform:scaleX(0.9222);">12.00</div>
<div class="btn" style="left:1397px;top:144.8px;width:16px;height:11.099999999999994px"></div>
<svg class="a" style="left:0;top:0;overflow:visible" width="1" height="1"><polygon points="1402.5,151.60000000000002 1407.5,151.60000000000002 1405.0,149.10000000000002" fill="#000"/></svg>
<div class="btn" style="left:1397px;top:155.9px;width:16px;height:11.099999999999994px"></div>
<svg class="a" style="left:0;top:0;overflow:visible" width="1" height="1"><polygon points="1402.5,160.2 1407.5,160.2 1405.0,162.7" fill="#000"/></svg>
<div class="btn" style="left:1412px;top:144.8px;width:16px;height:11.099999999999994px"></div>
<svg class="a" style="left:0;top:0;overflow:visible" width="1" height="1"><polygon points="1417.5,151.60000000000002 1422.5,151.60000000000002 1420.0,149.10000000000002" fill="#000"/></svg>
<div class="btn" style="left:1412px;top:155.9px;width:16px;height:11.099999999999994px"></div>
<svg class="a" style="left:0;top:0;overflow:visible" width="1" height="1"><polygon points="1417.5,160.2 1422.5,160.2 1420.0,162.7" fill="#000"/></svg>
<div class="btn" style="left:1427px;top:144.8px;width:16px;height:11.099999999999994px"></div>
<svg class="a" style="left:0;top:0;overflow:visible" width="1" height="1"><polygon points="1432.5,151.60000000000002 1437.5,151.60000000000002 1435.0,149.10000000000002" fill="#000"/></svg>
<div class="btn" style="left:1427px;top:155.9px;width:16px;height:11.099999999999994px"></div>
<svg class="a" style="left:0;top:0;overflow:visible" width="1" height="1"><polygon points="1432.5,160.2 1437.5,160.2 1435.0,162.7" fill="#000"/></svg>
<div class="a" style="left:1050px;top:171.3px;width:224px;height:1.5px;background:#8ab4dc"></div>
<div class="btn" style="left:1298.4px;top:174.4px;width:200.5px;height:19.599999999999994px"></div>
<div class="t" style="left:1309.65px;top:177.50px;font-size:13px;font-weight:bold;transform:scaleX(0.9094);">Add doublestar result to Report</div>
<div class="a" style="left:1289.5px;top:194px;width:210px;height:1.5px;background:#8ab4dc"></div>
<div class="gb" style="left:1043px;top:183.4px;width:238.5999999999999px;height:113.20000000000002px"></div>
<div class="t" style="left:1050.30px;top:177.94px;font-size:12px;transform:scaleX(0.8897);background:#f0f0f0;">Select the BaseTime for Event Time</div>
<div class="t" style="left:1062.70px;top:198.04px;font-size:12px;transform:scaleX(0.8658);">Selected frame (Base) : No.</div>
<div class="ed" style="left:1198.9px;top:193.9px;width:77.0px;height:19.099999999999994px;background:#fff"></div>
<div class="rd" style="left:1059.0px;top:215.3px"><div style="position:absolute;left:3px;top:3px;width:4px;height:4px;border-radius:2px;background:#000"></div></div>
<div class="t" style="left:1076.40px;top:215.54px;font-size:12px;transform:scaleX(0.9862);">First field</div>
<div class="rd" style="left:1147.2px;top:215.3px"></div>
<div class="t" style="left:1164.50px;top:215.54px;font-size:12px;transform:scaleX(0.8933);">Second field</div>
<div class="t" style="left:1250.70px;top:215.54px;font-size:12px;transform:scaleX(0.8395);">Graph</div>
<div class="ed" style="left:1058.9px;top:233px;width:18.09999999999991px;height:20.400000000000006px;background:#fff"></div>
<div class="t" style="left:1061.90px;top:237.00px;font-size:13px;transform:scaleX(0.9000);">17</div>
<div class="ed" style="left:1078.6px;top:233px;width:18.40000000000009px;height:20.400000000000006px;background:#fff"></div>
<div class="t" style="left:1081.60px;top:237.00px;font-size:13px;transform:scaleX(0.9000);">41</div>
<div class="ed" style="left:1098.6px;top:233px;width:46.80000000000018px;height:20.400000000000006px;background:#fff"></div>
<div class="t" style="left:1101.60px;top:237.00px;font-size:13px;transform:scaleX(0.9000);">2.9533</div>
<div class="ed" style="left:1162.3px;top:233px;width:18.40000000000009px;height:20.400000000000006px;background:#fff"></div>
<div class="t" style="left:1165.30px;top:237.00px;font-size:13px;transform:scaleX(0.9000);">17</div>
<div class="ed" style="left:1182px;top:233px;width:18.40000000000009px;height:20.400000000000006px;background:#fff"></div>
<div class="t" style="left:1185.00px;top:237.00px;font-size:13px;transform:scaleX(0.9000);">41</div>
<div class="ed" style="left:1202px;top:233px;width:46.799999999999955px;height:20.400000000000006px;background:#fff"></div>
<div class="t" style="left:1205.00px;top:237.00px;font-size:13px;transform:scaleX(0.9000);">2.9985</div>
<div class="btn" style="left:1257.7px;top:228.9px;width:17.5px;height:21.299999999999983px"></div>
<svg class="a" style="left:0;top:0;overflow:visible" width="1" height="1"><polygon points="1261.5,242.0 1271.5,242.0 1266.5,237.0" fill="#000"/></svg>
<div class="btn" style="left:1257.7px;top:254.3px;width:17.5px;height:20.69999999999999px"></div>
<svg class="a" style="left:0;top:0;overflow:visible" width="1" height="1"><polygon points="1261.5,262.1 1271.5,262.1 1266.5,267.1" fill="#000"/></svg>
<div class="t" style="left:1254.50px;top:277.54px;font-size:12px;transform:scaleX(0.8772);">Time</div>
<div class="btn" style="left:1050.3px;top:258.5px;width:200.10000000000014px;height:15.5px"></div>
<div class="t" style="left:1060.35px;top:260.04px;font-size:12px;transform:scaleX(0.8761);">Apply the edit time and Re-open graph</div>
<div class="btn" style="left:1050.3px;top:277.2px;width:200.10000000000014px;height:15.900000000000034px"></div>
<div class="t" style="left:1055.85px;top:278.54px;font-size:12px;transform:scaleX(0.8747);">Re-read  Time Stamp from current frame</div>
<div class="t" style="left:1290.20px;top:200.54px;font-size:12px;transform:scaleX(0.8975);">Integrated</div>
<div class="t" style="left:1290.20px;top:212.34px;font-size:12px;transform:scaleX(0.8453);">frames</div>
<div class="ed" style="left:1346.2px;top:207.5px;width:30.799999999999955px;height:19.80000000000001px;background:#fff"></div>
<div class="t" style="left:1349.20px;top:211.84px;font-size:12px;">0</div>
<div class="btn" style="left:1378px;top:207px;width:16.5px;height:11.0px"></div>
<svg class="a" style="left:0;top:0;overflow:visible" width="1" height="1"><polygon points="1383.75,213.75 1388.75,213.75 1386.25,211.25" fill="#000"/></svg>
<div class="btn" style="left:1378px;top:218.0px;width:16.5px;height:11.0px"></div>
<svg class="a" style="left:0;top:0;overflow:visible" width="1" height="1"><polygon points="1383.75,222.25 1388.75,222.25 1386.25,224.75" fill="#000"/></svg>
<div class="t" style="left:1402.50px;top:207.54px;font-size:12px;transform:scaleX(0.8999);">Digits</div>
<div class="ed" style="left:1434.3px;top:207.5px;width:22.299999999999955px;height:19.80000000000001px;background:#fff"></div>
<div class="t" style="left:1437.30px;top:211.84px;font-size:12px;">3</div>
<div class="btn" style="left:1457px;top:207px;width:17px;height:11.0px"></div>
<svg class="a" style="left:0;top:0;overflow:visible" width="1" height="1"><polygon points="1463.0,213.75 1468.0,213.75 1465.5,211.25" fill="#000"/></svg>
<div class="btn" style="left:1457px;top:218.0px;width:17px;height:11.0px"></div>
<svg class="a" style="left:0;top:0;overflow:visible" width="1" height="1"><polygon points="1463.0,222.25 1468.0,222.25 1465.5,224.75" fill="#000"/></svg>
<div class="ck" style="left:1291.1px;top:239.4px"></div>
<div class="t" style="left:1308.60px;top:237.84px;font-size:12px;transform:scaleX(0.8625);">Consider step hight for time estimation</div>
<div class="gb" style="left:1289.5px;top:261.6px;width:215.79999999999995px;height:43.599999999999966px"></div>
<div class="t" style="left:1297.50px;top:254.50px;font-size:13px;font-weight:bold;transform:scaleX(0.9111);background:#f0f0f0;">Calculation for event time</div>
<div class="rd" style="left:1299.2px;top:273.2px"></div>
<div class="t" style="left:1317.20px;top:272.84px;font-size:12px;transform:scaleX(0.7502);">OFF</div>
<div class="rd" style="left:1345.4px;top:273.2px"></div>
<div class="t" style="left:1362.70px;top:272.84px;font-size:12px;transform:scaleX(0.9257);">WAT120N</div>
<div class="rd" style="left:1425.6px;top:273.2px"></div>
<div class="t" style="left:1442.90px;top:272.84px;font-size:12px;transform:scaleX(0.8850);">WAT910H&gt;</div>
<div class="rd" style="left:1345.4px;top:288.5px"><div style="position:absolute;left:3px;top:3px;width:4px;height:4px;border-radius:2px;background:#000"></div></div>
<div class="t" style="left:1363.40px;top:287.90px;font-size:13px;font-weight:bold;transform:scaleX(0.9356);">CMOS or WAT100N</div>
<div class="ed" style="left:1043px;top:312.2px;width:463px;height:48.10000000000002px;background:#fff"></div>
<div class="btn" style="left:1442.3px;top:344.4px;width:64.20000000000005px;height:23.5px"></div>
<div class="t" style="left:1448.40px;top:349.84px;font-size:12px;transform:scaleX(0.8810);">-&gt; Clip brd.</div>
<div class="ed" style="left:1043.9px;top:373.2px;width:463px;height:258px"></div>
<div class="t" style="left:1051.20px;top:378.30px;font-size:15px;font-family:'Liberation Mono',monospace;color:#1a1a1a;transform:scaleX(0.8865);">2025-10-17 / (286106)2001 TM94 / UCAC4 615-009841 V=12</div>
<div class="t" style="left:1051.20px;top:408.10px;font-size:15px;font-family:'Liberation Mono',monospace;color:#1a1a1a;transform:scaleX(0.8865);">Event Time : 17h41m01.742s  +/- 0.357s  S/N=0.26</div>
<div class="t" style="left:1051.20px;top:423.10px;font-size:15px;font-family:'Liberation Mono',monospace;color:#1a1a1a;transform:scaleX(0.8865);">Mag Drop (predicted):  8.0   Mag.</div>
<div class="t" style="left:1051.20px;top:438.10px;font-size:15px;font-family:'Liberation Mono',monospace;color:#1a1a1a;transform:scaleX(0.8865);">Mag Drop (measured ):  0.05  Mag.</div>
<div class="t" style="left:1051.20px;top:468.30px;font-size:15px;font-family:'Liberation Mono',monospace;color:#1a1a1a;transform:scaleX(0.8865);">-Statistical analysis of Light Intensity-</div>
<div class="t" style="left:1051.20px;top:483.40px;font-size:15px;font-family:'Liberation Mono',monospace;color:#1a1a1a;transform:scaleX(0.8865);">Light intensity    Average   Stdv      n</div>
<div class="t" style="left:1051.20px;top:498.50px;font-size:15px;font-family:'Liberation Mono',monospace;color:#1a1a1a;transform:scaleX(0.8865);">  Combined  :      1894.9    332.3     20</div>
<div class="t" style="left:1051.20px;top:513.60px;font-size:15px;font-family:'Liberation Mono',monospace;color:#1a1a1a;transform:scaleX(0.8865);">  Background:      1803.8    346.9     20</div>
<div class="t" style="left:1051.20px;top:528.70px;font-size:15px;font-family:'Liberation Mono',monospace;color:#1a1a1a;transform:scaleX(0.8865);">Noise Level (N/S)  Upper    Lower   (S/N)</div>
<div class="t" style="left:1051.20px;top:543.80px;font-size:15px;font-family:'Liberation Mono',monospace;color:#1a1a1a;transform:scaleX(0.8865);">  First event:     0.0000   1.3200</div>
<div class="t" style="left:1051.20px;top:558.90px;font-size:15px;font-family:'Liberation Mono',monospace;color:#1a1a1a;transform:scaleX(0.8865);">  Total event:     3.6473   3.8074   0.26</div>
<div class="t" style="left:1051.20px;top:573.50px;font-size:15px;font-family:'Liberation Mono',monospace;color:#1a1a1a;transform:scaleX(0.8865);">0.94383</div>
<div class="a" style="left:1489px;top:375px;width:16px;height:247px;background:#f8f8f8"></div>
<svg class="a" style="left:0;top:0;overflow:visible" width="1" height="1"><polygon points="1493,387.0 1501,387.0 1497,383.0" fill="#a0a0a0"/></svg>
<svg class="a" style="left:0;top:0;overflow:visible" width="1" height="1"><polygon points="1493,604.0 1501,604.0 1497,608.0" fill="#a0a0a0"/></svg>
<div class="a" style="left:1063px;top:622px;width:316px;height:1.5px;background:#777"></div>
<div class="trk" style="left:1492px;top:623px;width:16px;height:145px"></div>
<div class="btn" style="left:1492px;top:624.5px;width:16px;height:15.0px"></div>
<svg class="a" style="left:0;top:0;overflow:visible" width="1" height="1"><polygon points="1496.0,634.0 1504.0,634.0 1500.0,630.0" fill="#000"/></svg>
<div class="btn" style="left:1492px;top:648px;width:16px;height:17px"></div>
<div class="btn" style="left:1492px;top:752.5px;width:16px;height:15.5px"></div>
<svg class="a" style="left:0;top:0;overflow:visible" width="1" height="1"><polygon points="1496.0,758.25 1504.0,758.25 1500.0,762.25" fill="#000"/></svg>
<div class="gb" style="left:1044.5px;top:646px;width:175.0px;height:65.60000000000002px"></div>
<div class="a" style="left:1051.5px;top:643.0px;width:84.0px;height:6px;background:#f0f0f0"></div>
<div class="t" style="left:1052.50px;top:640.04px;font-size:12px;transform:scaleX(0.8908);">Text out to Graph</div>
<div class="rd" style="left:1052.7px;top:655.7px"><div style="position:absolute;left:3px;top:3px;width:4px;height:4px;border-radius:2px;background:#000"></div></div>
<div class="t" style="left:1070.00px;top:655.94px;font-size:12px;transform:scaleX(0.7502);">OFF</div>
<div class="rd" style="left:1052.7px;top:673.9px"></div>
<div class="t" style="left:1070.00px;top:674.14px;font-size:12px;transform:scaleX(0.8814);">Text with transparency BKG</div>
<div class="rd" style="left:1052.7px;top:692.0px"></div>
<div class="t" style="left:1070.00px;top:691.94px;font-size:12px;transform:scaleX(0.9033);">Text with opaque background</div>
<div class="gb" style="left:1225.9px;top:646px;width:88.09999999999991px;height:65.60000000000002px"></div>
<div class="a" style="left:1233.8px;top:643.0px;width:29.0px;height:6px;background:#f0f0f0"></div>
<div class="t" style="left:1234.80px;top:640.04px;font-size:12px;transform:scaleX(0.8995);">Mode</div>
<div class="rd" style="left:1234.7px;top:655.7px"><div style="position:absolute;left:3px;top:3px;width:4px;height:4px;border-radius:2px;background:#000"></div></div>
<div class="t" style="left:1252.30px;top:655.94px;font-size:12px;transform:scaleX(0.8772);">Time</div>
<div class="rd" style="left:1234.7px;top:673.9px"></div>
<div class="t" style="left:1252.30px;top:674.14px;font-size:12px;transform:scaleX(0.8958);">Info. Right</div>
<div class="rd" style="left:1234.7px;top:692.0px"></div>
<div class="t" style="left:1252.30px;top:691.94px;font-size:12px;transform:scaleX(0.9208);">Info. Left</div>
<div class="trk" style="left:1321.4px;top:641.6px;width:162px;height:18px"></div>
<div class="btn" style="left:1321.4px;top:641.6px;width:17.59999999999991px;height:18.199999999999932px"></div>
<svg class="a" style="left:0;top:0;overflow:visible" width="1" height="1"><polygon points="1332.2,646.7 1332.2,654.7 1328.2,650.7" fill="#000"/></svg>
<div class="btn" style="left:1466px;top:641.6px;width:17px;height:18.199999999999932px"></div>
<svg class="a" style="left:0;top:0;overflow:visible" width="1" height="1"><polygon points="1472.5,646.7 1472.5,654.7 1476.5,650.7" fill="#000"/></svg>
<div class="btn" style="left:1404px;top:641.6px;width:17.6px;height:18px"></div>
<div class="gb" style="left:1322.3px;top:670.3px;width:54.700000000000045px;height:41.30000000000007px"></div>
<div class="a" style="left:1329.3px;top:667.3px;width:45.0px;height:6px;background:#f0f0f0"></div>
<div class="t" style="left:1330.30px;top:663.94px;font-size:12px;transform:scaleX(0.8832);">Font size</div>
<div class="btn" style="left:1329.3px;top:680.5px;width:17.5px;height:11.75px"></div>
<svg class="a" style="left:0;top:0;overflow:visible" width="1" height="1"><polygon points="1335.55,687.625 1340.55,687.625 1338.05,685.125" fill="#000"/></svg>
<div class="btn" style="left:1329.3px;top:692.25px;width:17.5px;height:11.75px"></div>
<svg class="a" style="left:0;top:0;overflow:visible" width="1" height="1"><polygon points="1335.55,696.875 1340.55,696.875 1338.05,699.375" fill="#000"/></svg>
<div class="ed" style="left:1347.4px;top:680.5px;width:22.299999999999955px;height:19.5px;background:#fff"></div>
<div class="t" style="left:1350.40px;top:684.84px;font-size:12px;">10</div>
<div class="ed" style="left:1388.2px;top:664.5px;width:97.0px;height:19.100000000000023px;background:#fff"></div>
<div class="t" style="left:1391.20px;top:666.90px;font-size:13px;transform:scaleX(1.0309);">Edit16</div>
<div class="ed" style="left:1388.2px;top:688.4px;width:97.0px;height:19.100000000000023px;background:#fff"></div>
<div class="t" style="left:1391.20px;top:691.10px;font-size:13px;transform:scaleX(1.0309);">Edit25</div>
<div class="ed" style="left:1050.3px;top:720.2px;width:431.70000000000005px;height:71.59999999999991px;background:#fff"></div>
<div class="t" style="left:1054.70px;top:722.50px;font-size:15px;transform:scaleX(0.9609);">1  17 41 01.742 +/- 0.357s,  S/N= 0.26 D   Main Change Miss</div>
<div class="a" style="left:1052.5px;top:740.3px;width:427px;height:16px;background:#0078d7"></div>
<div class="t" style="left:1054.70px;top:739.30px;font-size:15px;color:#fff;transform:scaleX(0.9650);">2  17 41 01.742 +/- 0.357s,  S/N= 0.26 R   Main light change Miss</div>
<div class="btn" style="left:1073.8px;top:800.7px;width:192.79999999999995px;height:22.899999999999977px"></div>
<div class="t" style="left:1086.70px;top:805.54px;font-size:12px;transform:scaleX(0.8817);">Miss Disappearance  (approx. time)</div>
<div class="a" style="left:1273.3px;top:799.7px;width:186.5px;height:25px;border:1px solid #000"></div>
<div class="btn" style="left:1274.3px;top:800.7px;width:184.5px;height:22.899999999999977px"></div>
<div class="t" style="left:1282.05px;top:805.54px;font-size:12px;transform:scaleX(0.8921);">Miss  Reapppearance [approx. tine]</div>
<div class="a" style="left:1278px;top:804px;width:177px;height:16px;border:1px dotted #000"></div>
<div class="ed" style="left:1050.3px;top:840.2px;width:110.40000000000009px;height:19.09999999999991px;background:#fff"></div>
<div class="t" style="left:1053.30px;top:843.84px;font-size:12px;transform:scaleX(0.8718);">Main light change</div>
<div class="btn" style="left:1144px;top:842px;width:15px;height:15.5px"></div>
<svg class="a" style="left:0;top:0;overflow:visible" width="1" height="1"><polygon points="1147.5,847.75 1155.5,847.75 1151.5,851.75" fill="#000"/></svg>
<div class="btn" style="left:1171.2px;top:832.5px;width:54.700000000000045px;height:33.5px"></div>
<div class="t" style="left:1177.55px;top:841.20px;font-size:15px;transform:scaleX(0.9686);">Delete</div>
<div class="btn" style="left:1232.9px;top:832.5px;width:47.09999999999991px;height:33.5px"></div>
<div class="t" style="left:1243.95px;top:841.20px;font-size:15px;transform:scaleX(0.9088);">Sort</div>
<div class="btn" style="left:1292.7px;top:832.5px;width:111.29999999999995px;height:33.5px"></div>
<div class="t" style="left:1301.85px;top:841.20px;font-size:15px;font-weight:bold;transform:scaleX(0.9791);">Add to report</div>
<div class="btn" style="left:1418.4px;top:832.5px;width:88.09999999999991px;height:33.5px"></div>
<div class="t" style="left:1423.95px;top:842.00px;font-size:13px;font-weight:bold;transform:scaleX(0.8738);">Apply &amp; Close</div>
</div></body></html>
